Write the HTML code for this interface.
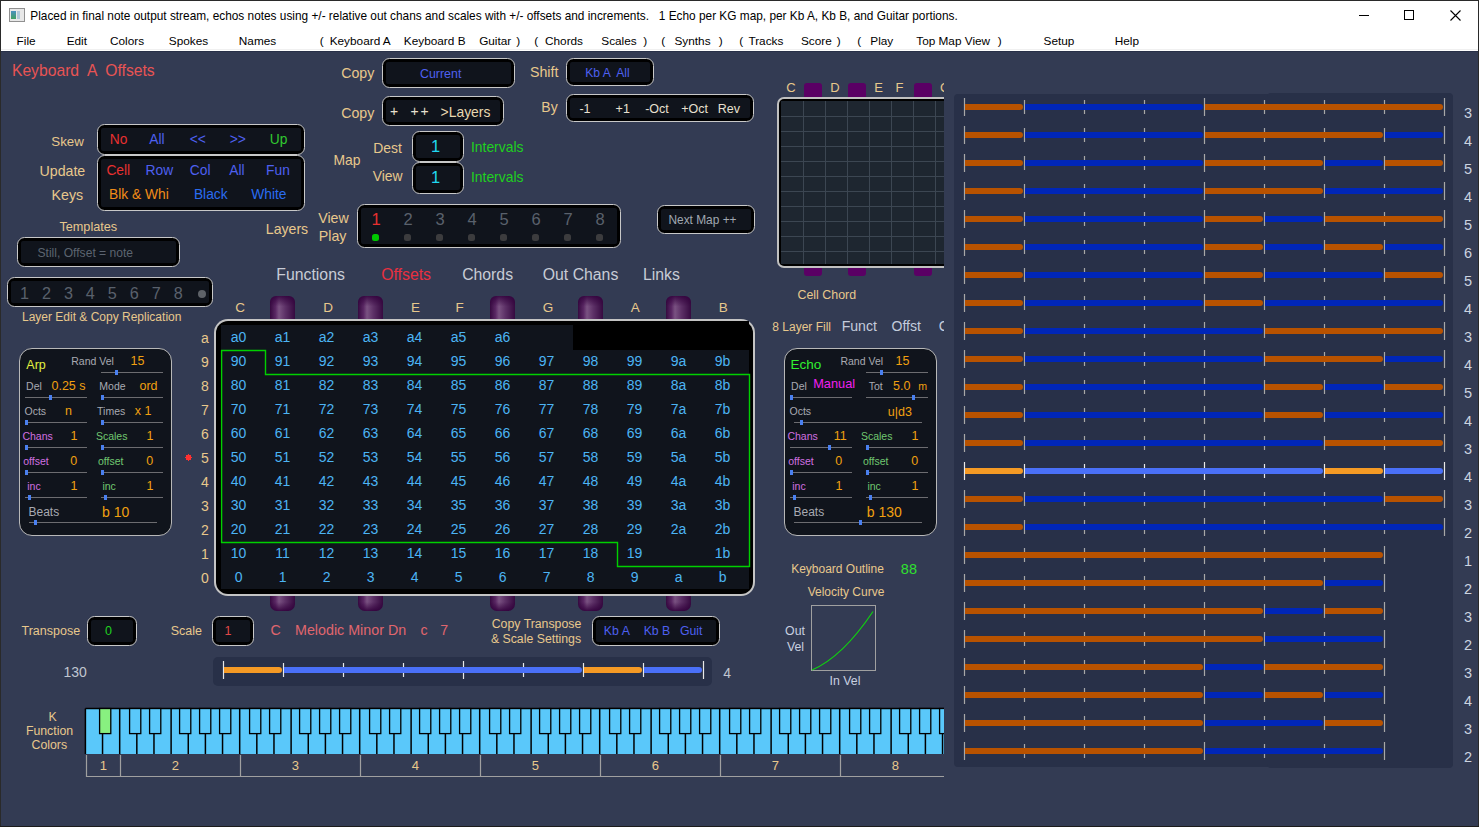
<!DOCTYPE html><html><head><meta charset="utf-8"><style>
html,body{margin:0;padding:0;width:1479px;height:827px;overflow:hidden;background:#333b53;}
body{position:relative;font-family:"Liberation Sans", sans-serif;}
.t{position:absolute;white-space:pre;line-height:1;}
.r{position:absolute;}
svg{position:absolute;left:0;top:0;}
</style></head><body>
<div class="r" style="left:0px;top:0px;width:1479px;height:51px;background:#ffffff;"></div>
<div class="r" style="left:0px;top:49px;width:1479px;height:1px;background:#f0f0f0;"></div>
<div class="r" style="left:0px;top:51px;width:1479px;height:1px;background:#283048;"></div>
<div class="r" style="left:0px;top:0px;width:1479px;height:1px;background:#2a2a2a;"></div>
<div class="r" style="left:0px;top:0px;width:1px;height:827px;background:#2a2a2a;"></div>
<div class="r" style="left:1478px;top:0px;width:1px;height:827px;background:#2a2a2a;"></div>
<div class="r" style="left:0px;top:826px;width:1479px;height:1px;background:#1c1c1c;"></div>
<div class="r" style="left:9px;top:8px;width:14px;height:12px;border:1px solid #909090;background:#e8e8e8"></div>
<div class="r" style="left:11px;top:11px;width:5px;height:8px;background:linear-gradient(#4a90c0,#40a060)"></div>
<div class="r" style="left:17px;top:11px;width:3px;height:8px;background:#b0c8d8"></div>
<div class="t" style="left:494.00px;top:10.97px;font-size:11.85px;color:#000;transform:translateX(-50%);">Placed in final note output stream, echos notes using +/- relative out chans and scales with +/- offsets and increments.   1 Echo per KG map, per Kb A, Kb B, and Guitar portions.</div>
<div class="r" style="left:1359px;top:15px;width:10px;height:1px;background:#000;"></div>
<div class="r" style="left:1404px;top:10px;width:8px;height:8px;border:1px solid #000"></div>
<svg width="1479" height="40" style="left:0;top:0"><path d="M1450.5 10.5 L1460.5 20.5 M1460.5 10.5 L1450.5 20.5" stroke="#000" stroke-width="1.1"/></svg>
<div class="t" style="left:26.10px;top:36.01px;font-size:11.8px;color:#000;transform:translateX(-50%);">File</div>
<div class="t" style="left:76.85px;top:36.01px;font-size:11.8px;color:#000;transform:translateX(-50%);">Edit</div>
<div class="t" style="left:127.00px;top:36.01px;font-size:11.8px;color:#000;transform:translateX(-50%);">Colors</div>
<div class="t" style="left:188.50px;top:36.01px;font-size:11.8px;color:#000;transform:translateX(-50%);">Spokes</div>
<div class="t" style="left:257.50px;top:36.01px;font-size:11.8px;color:#000;transform:translateX(-50%);">Names</div>
<div class="t" style="left:321.75px;top:36.01px;font-size:11.8px;color:#000;transform:translateX(-50%);">(</div>
<div class="t" style="left:360.20px;top:36.01px;font-size:11.8px;color:#000;transform:translateX(-50%);">Keyboard A</div>
<div class="t" style="left:434.70px;top:36.01px;font-size:11.8px;color:#000;transform:translateX(-50%);">Keyboard B</div>
<div class="t" style="left:495.20px;top:36.01px;font-size:11.8px;color:#000;transform:translateX(-50%);">Guitar</div>
<div class="t" style="left:518.25px;top:36.01px;font-size:11.8px;color:#000;transform:translateX(-50%);">)</div>
<div class="t" style="left:536.25px;top:36.01px;font-size:11.8px;color:#000;transform:translateX(-50%);">(</div>
<div class="t" style="left:564.00px;top:36.01px;font-size:11.8px;color:#000;transform:translateX(-50%);">Chords</div>
<div class="t" style="left:619.00px;top:36.01px;font-size:11.8px;color:#000;transform:translateX(-50%);">Scales</div>
<div class="t" style="left:645.25px;top:36.01px;font-size:11.8px;color:#000;transform:translateX(-50%);">)</div>
<div class="t" style="left:663.25px;top:36.01px;font-size:11.8px;color:#000;transform:translateX(-50%);">(</div>
<div class="t" style="left:692.50px;top:36.01px;font-size:11.8px;color:#000;transform:translateX(-50%);">Synths</div>
<div class="t" style="left:720.75px;top:36.01px;font-size:11.8px;color:#000;transform:translateX(-50%);">)</div>
<div class="t" style="left:741.25px;top:36.01px;font-size:11.8px;color:#000;transform:translateX(-50%);">(</div>
<div class="t" style="left:765.90px;top:36.01px;font-size:11.8px;color:#000;transform:translateX(-50%);">Tracks</div>
<div class="t" style="left:816.35px;top:36.01px;font-size:11.8px;color:#000;transform:translateX(-50%);">Score</div>
<div class="t" style="left:838.75px;top:36.01px;font-size:11.8px;color:#000;transform:translateX(-50%);">)</div>
<div class="t" style="left:859.25px;top:36.01px;font-size:11.8px;color:#000;transform:translateX(-50%);">(</div>
<div class="t" style="left:881.75px;top:36.01px;font-size:11.8px;color:#000;transform:translateX(-50%);">Play</div>
<div class="t" style="left:953.20px;top:36.01px;font-size:11.8px;color:#000;transform:translateX(-50%);">Top Map View</div>
<div class="t" style="left:999.75px;top:36.01px;font-size:11.8px;color:#000;transform:translateX(-50%);">)</div>
<div class="t" style="left:1059.00px;top:36.01px;font-size:11.8px;color:#000;transform:translateX(-50%);">Setup</div>
<div class="t" style="left:1126.90px;top:36.01px;font-size:11.8px;color:#000;transform:translateX(-50%);">Help</div>
<div class="t" style="left:83.30px;top:62.71px;font-size:15.7px;color:#e85454;transform:translateX(-50%);">Keyboard  A  Offsets</div>
<div class="t" style="left:357.80px;top:66.28px;font-size:14.2px;color:#e8c88c;transform:translateX(-50%);">Copy</div>
<div class="r" style="left:382px;top:58px;width:133px;height:30px;background:#000;border:1px solid #c8c8c8;border-radius:7.5px;box-sizing:border-box"></div>
<div class="r" style="left:386px;top:62px;width:125px;height:22px;background:#10141c;border-radius:2px"></div>
<div class="t" style="left:440.70px;top:68.00px;font-size:12.4px;color:#4e60f0;transform:translateX(-50%);">Current</div>
<div class="t" style="left:357.80px;top:106.28px;font-size:14.2px;color:#e8c88c;transform:translateX(-50%);">Copy</div>
<div class="r" style="left:382px;top:96px;width:122px;height:30px;background:#000;border:1px solid #c8c8c8;border-radius:7.5px;box-sizing:border-box"></div>
<div class="r" style="left:386px;top:100px;width:114px;height:22px;background:#10141c;border-radius:2px"></div>
<div class="t" style="left:394.00px;top:105.23px;font-size:13.9px;color:#e8e0d0;transform:translateX(-50%);">+</div>
<div class="t" style="left:419.60px;top:105.23px;font-size:13.9px;color:#e8e0d0;transform:translateX(-50%);letter-spacing:2px;margin-left:1px">++</div>
<div class="t" style="left:465.50px;top:106.23px;font-size:13.9px;color:#e8d8b0;transform:translateX(-50%);">>Layers</div>
<div class="t" style="left:544.20px;top:65.48px;font-size:14.2px;color:#e8c88c;transform:translateX(-50%);">Shift</div>
<div class="r" style="left:566px;top:58px;width:88px;height:28px;background:#000;border:1px solid #c8c8c8;border-radius:7.5px;box-sizing:border-box"></div>
<div class="r" style="left:570px;top:62px;width:80px;height:20px;background:#10141c;border-radius:2px"></div>
<div class="t" style="left:607.50px;top:66.76px;font-size:12.1px;color:#4e60f0;transform:translateX(-50%);">Kb A  All</div>
<div class="t" style="left:549.50px;top:100.35px;font-size:14px;color:#e8c88c;transform:translateX(-50%);">By</div>
<div class="r" style="left:566px;top:94px;width:188px;height:28px;background:#000;border:1px solid #c8c8c8;border-radius:7.5px;box-sizing:border-box"></div>
<div class="r" style="left:570px;top:98px;width:180px;height:20px;background:#10141c;border-radius:2px"></div>
<div class="t" style="left:585.00px;top:103.42px;font-size:12.5px;color:#e8e0d0;transform:translateX(-50%);">-1</div>
<div class="t" style="left:622.75px;top:103.42px;font-size:12.5px;color:#e8e0d0;transform:translateX(-50%);">+1</div>
<div class="t" style="left:657.00px;top:103.42px;font-size:12.5px;color:#e8e0d0;transform:translateX(-50%);">-Oct</div>
<div class="t" style="left:694.50px;top:103.42px;font-size:12.5px;color:#e8e0d0;transform:translateX(-50%);">+Oct</div>
<div class="t" style="left:728.80px;top:103.42px;font-size:12.5px;color:#e8e0d0;transform:translateX(-50%);">Rev</div>
<div class="t" style="left:67.60px;top:134.74px;font-size:13.3px;color:#e8c88c;transform:translateX(-50%);">Skew</div>
<div class="r" style="left:97px;top:124px;width:208px;height:31px;background:#000;border:1px solid #c8c8c8;border-radius:7.5px;box-sizing:border-box"></div>
<div class="r" style="left:101px;top:128px;width:200px;height:23px;background:#10141c;border-radius:2px"></div>
<div class="t" style="left:118.50px;top:133.32px;font-size:13.8px;color:#e83030;transform:translateX(-50%);">No</div>
<div class="t" style="left:157.00px;top:133.32px;font-size:13.8px;color:#4e60f0;transform:translateX(-50%);">All</div>
<div class="t" style="left:197.75px;top:133.32px;font-size:13.8px;color:#4e60f0;transform:translateX(-50%);"><<</div>
<div class="t" style="left:237.70px;top:133.32px;font-size:13.8px;color:#4e60f0;transform:translateX(-50%);">>></div>
<div class="t" style="left:278.55px;top:133.32px;font-size:13.8px;color:#30c830;transform:translateX(-50%);">Up</div>
<div class="t" style="left:62.40px;top:163.98px;font-size:14.2px;color:#e8c88c;transform:translateX(-50%);">Update</div>
<div class="t" style="left:67.30px;top:187.98px;font-size:14.2px;color:#e8c88c;transform:translateX(-50%);">Keys</div>
<div class="r" style="left:97px;top:155px;width:208px;height:56px;background:#000;border:1px solid #c8c8c8;border-radius:7.5px;box-sizing:border-box"></div>
<div class="r" style="left:101px;top:159px;width:200px;height:48px;background:#10141c;border-radius:2px"></div>
<div class="t" style="left:118.30px;top:164.32px;font-size:13.8px;color:#e83030;transform:translateX(-50%);">Cell</div>
<div class="t" style="left:159.30px;top:164.32px;font-size:13.8px;color:#4e60f0;transform:translateX(-50%);">Row</div>
<div class="t" style="left:200.15px;top:164.32px;font-size:13.8px;color:#4e60f0;transform:translateX(-50%);">Col</div>
<div class="t" style="left:236.90px;top:164.32px;font-size:13.8px;color:#4e60f0;transform:translateX(-50%);">All</div>
<div class="t" style="left:278.00px;top:164.32px;font-size:13.8px;color:#4e60f0;transform:translateX(-50%);">Fun</div>
<div class="t" style="left:138.90px;top:188.32px;font-size:13.8px;color:#f08c18;transform:translateX(-50%);">Blk & Whi</div>
<div class="t" style="left:210.80px;top:188.32px;font-size:13.8px;color:#2a6cf0;transform:translateX(-50%);">Black</div>
<div class="t" style="left:268.85px;top:188.32px;font-size:13.8px;color:#2a6cf0;transform:translateX(-50%);">White</div>
<div class="t" style="left:347.00px;top:154.23px;font-size:13.9px;color:#e8c88c;transform:translateX(-50%);">Map</div>
<div class="t" style="left:387.60px;top:142.23px;font-size:13.9px;color:#e8c88c;transform:translateX(-50%);">Dest</div>
<div class="t" style="left:387.60px;top:170.23px;font-size:13.9px;color:#e8c88c;transform:translateX(-50%);">View</div>
<div class="r" style="left:412px;top:131px;width:52px;height:31px;background:#000;border:1px solid #c8c8c8;border-radius:7.5px;box-sizing:border-box"></div>
<div class="r" style="left:416px;top:135px;width:44px;height:23px;background:#10141c;border-radius:2px"></div>
<div class="r" style="left:412px;top:162px;width:52px;height:32px;background:#000;border:1px solid #c8c8c8;border-radius:7.5px;box-sizing:border-box"></div>
<div class="r" style="left:416px;top:166px;width:44px;height:24px;background:#10141c;border-radius:2px"></div>
<div class="t" style="left:435.50px;top:137.53px;font-size:16.5px;color:#20d8f0;transform:translateX(-50%);">1</div>
<div class="t" style="left:435.50px;top:168.53px;font-size:16.5px;color:#20d8f0;transform:translateX(-50%);">1</div>
<div class="t" style="left:497.20px;top:140.73px;font-size:13.9px;color:#20d020;transform:translateX(-50%);">Intervals</div>
<div class="t" style="left:497.20px;top:171.23px;font-size:13.9px;color:#20d020;transform:translateX(-50%);">Intervals</div>
<div class="t" style="left:88.30px;top:221.25px;font-size:12.7px;color:#e8c88c;transform:translateX(-50%);">Templates</div>
<div class="r" style="left:17px;top:237px;width:163px;height:30px;background:#000;border:1px solid #c8c8c8;border-radius:7.5px;box-sizing:border-box"></div>
<div class="r" style="left:21px;top:241px;width:155px;height:22px;background:#10141c;border-radius:2px"></div>
<div class="t" style="left:85.30px;top:247.26px;font-size:12.1px;color:#5c6470;transform:translateX(-50%);">Still, Offset = note</div>
<div class="r" style="left:7px;top:277px;width:206px;height:30px;background:#000;border:1px solid #c8c8c8;border-radius:7.5px;box-sizing:border-box"></div>
<div class="r" style="left:11px;top:281px;width:198px;height:22px;background:#10141c;border-radius:2px"></div>
<div class="t" style="left:24.50px;top:285.29px;font-size:16.2px;color:#5a616c;transform:translateX(-50%);">1</div>
<div class="t" style="left:46.45px;top:285.29px;font-size:16.2px;color:#5a616c;transform:translateX(-50%);">2</div>
<div class="t" style="left:68.40px;top:285.29px;font-size:16.2px;color:#5a616c;transform:translateX(-50%);">3</div>
<div class="t" style="left:90.35px;top:285.29px;font-size:16.2px;color:#5a616c;transform:translateX(-50%);">4</div>
<div class="t" style="left:112.30px;top:285.29px;font-size:16.2px;color:#5a616c;transform:translateX(-50%);">5</div>
<div class="t" style="left:134.25px;top:285.29px;font-size:16.2px;color:#5a616c;transform:translateX(-50%);">6</div>
<div class="t" style="left:156.20px;top:285.29px;font-size:16.2px;color:#5a616c;transform:translateX(-50%);">7</div>
<div class="t" style="left:178.15px;top:285.29px;font-size:16.2px;color:#5a616c;transform:translateX(-50%);">8</div>
<div class="r" style="left:197.5px;top:289.5px;width:8px;height:8px;border-radius:4px;background:#5e6268"></div>
<div class="t" style="left:101.70px;top:310.84px;font-size:12px;color:#e8c88c;transform:translateX(-50%);">Layer Edit & Copy Replication</div>
<div class="t" style="left:287.00px;top:222.36px;font-size:14.1px;color:#e8c88c;transform:translateX(-50%);">Layers</div>
<div class="t" style="left:333.50px;top:210.98px;font-size:14.2px;color:#e8c88c;transform:translateX(-50%);">View</div>
<div class="t" style="left:332.60px;top:229.48px;font-size:14.2px;color:#e8c88c;transform:translateX(-50%);">Play</div>
<div class="r" style="left:357px;top:204px;width:264px;height:44px;background:#000;border:1px solid #c8c8c8;border-radius:7.5px;box-sizing:border-box"></div>
<div class="r" style="left:361px;top:208px;width:256px;height:36px;background:#10141c;border-radius:2px"></div>
<div class="t" style="left:376.00px;top:211.03px;font-size:16.5px;color:#e83030;transform:translateX(-50%);">1</div>
<div class="r" style="left:372px;top:234px;width:7px;height:7px;border-radius:2.5px;background:#00c800"></div>
<div class="t" style="left:408.00px;top:211.03px;font-size:16.5px;color:#5a616c;transform:translateX(-50%);">2</div>
<div class="r" style="left:404px;top:234px;width:7px;height:7px;border-radius:2.5px;background:#3c3c3e"></div>
<div class="t" style="left:440.00px;top:211.03px;font-size:16.5px;color:#5a616c;transform:translateX(-50%);">3</div>
<div class="r" style="left:436px;top:234px;width:7px;height:7px;border-radius:2.5px;background:#3c3c3e"></div>
<div class="t" style="left:472.00px;top:211.03px;font-size:16.5px;color:#5a616c;transform:translateX(-50%);">4</div>
<div class="r" style="left:468px;top:234px;width:7px;height:7px;border-radius:2.5px;background:#3c3c3e"></div>
<div class="t" style="left:504.00px;top:211.03px;font-size:16.5px;color:#5a616c;transform:translateX(-50%);">5</div>
<div class="r" style="left:500px;top:234px;width:7px;height:7px;border-radius:2.5px;background:#3c3c3e"></div>
<div class="t" style="left:536.00px;top:211.03px;font-size:16.5px;color:#5a616c;transform:translateX(-50%);">6</div>
<div class="r" style="left:532px;top:234px;width:7px;height:7px;border-radius:2.5px;background:#3c3c3e"></div>
<div class="t" style="left:568.00px;top:211.03px;font-size:16.5px;color:#5a616c;transform:translateX(-50%);">7</div>
<div class="r" style="left:564px;top:234px;width:7px;height:7px;border-radius:2.5px;background:#3c3c3e"></div>
<div class="t" style="left:600.00px;top:211.03px;font-size:16.5px;color:#5a616c;transform:translateX(-50%);">8</div>
<div class="r" style="left:596px;top:234px;width:7px;height:7px;border-radius:2.5px;background:#3c3c3e"></div>
<div class="r" style="left:657px;top:205px;width:98px;height:29px;background:#000;border:1px solid #c8c8c8;border-radius:7.5px;box-sizing:border-box"></div>
<div class="r" style="left:661px;top:209px;width:90px;height:21px;background:#10141c;border-radius:2px"></div>
<div class="t" style="left:702.50px;top:215.43px;font-size:11.9px;color:#a0a8b2;transform:translateX(-50%);">Next Map ++</div>
<div class="t" style="left:310.60px;top:267.13px;font-size:15.8px;color:#c8ccd6;transform:translateX(-50%);">Functions</div>
<div class="t" style="left:406.10px;top:267.13px;font-size:15.8px;color:#e83040;transform:translateX(-50%);">Offsets</div>
<div class="t" style="left:487.60px;top:267.13px;font-size:15.8px;color:#c8ccd6;transform:translateX(-50%);">Chords</div>
<div class="t" style="left:580.55px;top:267.13px;font-size:15.8px;color:#c8ccd6;transform:translateX(-50%);">Out Chans</div>
<div class="t" style="left:661.35px;top:267.13px;font-size:15.8px;color:#c8ccd6;transform:translateX(-50%);">Links</div>
<div class="r" style="left:214px;top:319px;width:541px;height:277px;background:#c4c4c4;border-radius:14px"></div>
<div class="r" style="left:216px;top:321px;width:537px;height:273px;background:#000;border-radius:12px"></div>
<div class="r" style="left:221px;top:325px;width:528px;height:264px;background:#10141c;"></div>
<div class="r" style="left:573px;top:321px;width:176px;height:28.5px;background:#000;"></div>
<div class="r" style="left:270.1px;top:296px;width:25px;height:23px;border-radius:6px 6px 0 0;background:linear-gradient(180deg,rgba(50,0,60,.85) 0%,rgba(50,0,60,0) 45%),linear-gradient(90deg,#360a40 0%,#5a2864 22%,#7a5282 36%,#5c3066 62%,#360a40 100%)"></div>
<div class="r" style="left:270.1px;top:596px;width:25px;height:15px;border-radius:0 0 7px 7px;background:linear-gradient(0deg,rgba(50,0,60,.9) 0%,rgba(50,0,60,0) 60%),linear-gradient(90deg,#360a40 0%,#5a2864 22%,#7a5282 36%,#5c3066 62%,#360a40 100%)"></div>
<div class="r" style="left:358.1px;top:296px;width:25px;height:23px;border-radius:6px 6px 0 0;background:linear-gradient(180deg,rgba(50,0,60,.85) 0%,rgba(50,0,60,0) 45%),linear-gradient(90deg,#360a40 0%,#5a2864 22%,#7a5282 36%,#5c3066 62%,#360a40 100%)"></div>
<div class="r" style="left:358.1px;top:596px;width:25px;height:15px;border-radius:0 0 7px 7px;background:linear-gradient(0deg,rgba(50,0,60,.9) 0%,rgba(50,0,60,0) 60%),linear-gradient(90deg,#360a40 0%,#5a2864 22%,#7a5282 36%,#5c3066 62%,#360a40 100%)"></div>
<div class="r" style="left:490.1px;top:296px;width:25px;height:23px;border-radius:6px 6px 0 0;background:linear-gradient(180deg,rgba(50,0,60,.85) 0%,rgba(50,0,60,0) 45%),linear-gradient(90deg,#360a40 0%,#5a2864 22%,#7a5282 36%,#5c3066 62%,#360a40 100%)"></div>
<div class="r" style="left:490.1px;top:596px;width:25px;height:15px;border-radius:0 0 7px 7px;background:linear-gradient(0deg,rgba(50,0,60,.9) 0%,rgba(50,0,60,0) 60%),linear-gradient(90deg,#360a40 0%,#5a2864 22%,#7a5282 36%,#5c3066 62%,#360a40 100%)"></div>
<div class="r" style="left:578.1px;top:296px;width:25px;height:23px;border-radius:6px 6px 0 0;background:linear-gradient(180deg,rgba(50,0,60,.85) 0%,rgba(50,0,60,0) 45%),linear-gradient(90deg,#360a40 0%,#5a2864 22%,#7a5282 36%,#5c3066 62%,#360a40 100%)"></div>
<div class="r" style="left:578.1px;top:596px;width:25px;height:15px;border-radius:0 0 7px 7px;background:linear-gradient(0deg,rgba(50,0,60,.9) 0%,rgba(50,0,60,0) 60%),linear-gradient(90deg,#360a40 0%,#5a2864 22%,#7a5282 36%,#5c3066 62%,#360a40 100%)"></div>
<div class="r" style="left:666.1px;top:296px;width:25px;height:23px;border-radius:6px 6px 0 0;background:linear-gradient(180deg,rgba(50,0,60,.85) 0%,rgba(50,0,60,0) 45%),linear-gradient(90deg,#360a40 0%,#5a2864 22%,#7a5282 36%,#5c3066 62%,#360a40 100%)"></div>
<div class="r" style="left:666.1px;top:596px;width:25px;height:15px;border-radius:0 0 7px 7px;background:linear-gradient(0deg,rgba(50,0,60,.9) 0%,rgba(50,0,60,0) 60%),linear-gradient(90deg,#360a40 0%,#5a2864 22%,#7a5282 36%,#5c3066 62%,#360a40 100%)"></div>
<div class="t" style="left:240.00px;top:300.57px;font-size:13.5px;color:#e8c88c;transform:translateX(-50%);">C</div>
<div class="t" style="left:328.00px;top:300.57px;font-size:13.5px;color:#e8c88c;transform:translateX(-50%);">D</div>
<div class="t" style="left:415.50px;top:300.57px;font-size:13.5px;color:#e8c88c;transform:translateX(-50%);">E</div>
<div class="t" style="left:459.60px;top:300.57px;font-size:13.5px;color:#e8c88c;transform:translateX(-50%);">F</div>
<div class="t" style="left:548.00px;top:300.57px;font-size:13.5px;color:#e8c88c;transform:translateX(-50%);">G</div>
<div class="t" style="left:635.30px;top:300.57px;font-size:13.5px;color:#e8c88c;transform:translateX(-50%);">A</div>
<div class="t" style="left:723.30px;top:300.57px;font-size:13.5px;color:#e8c88c;transform:translateX(-50%);">B</div>
<div class="t" style="left:205.00px;top:331.15px;font-size:14px;color:#e8c88c;transform:translateX(-50%);">a</div>
<div class="t" style="left:238.60px;top:330.15px;font-size:14px;color:#4cb4f4;transform:translateX(-50%);">a0</div>
<div class="t" style="left:282.60px;top:330.15px;font-size:14px;color:#4cb4f4;transform:translateX(-50%);">a1</div>
<div class="t" style="left:326.60px;top:330.15px;font-size:14px;color:#4cb4f4;transform:translateX(-50%);">a2</div>
<div class="t" style="left:370.60px;top:330.15px;font-size:14px;color:#4cb4f4;transform:translateX(-50%);">a3</div>
<div class="t" style="left:414.60px;top:330.15px;font-size:14px;color:#4cb4f4;transform:translateX(-50%);">a4</div>
<div class="t" style="left:458.60px;top:330.15px;font-size:14px;color:#4cb4f4;transform:translateX(-50%);">a5</div>
<div class="t" style="left:502.60px;top:330.15px;font-size:14px;color:#4cb4f4;transform:translateX(-50%);">a6</div>
<div class="t" style="left:205.00px;top:355.15px;font-size:14px;color:#e8c88c;transform:translateX(-50%);">9</div>
<div class="t" style="left:238.60px;top:354.15px;font-size:14px;color:#4cb4f4;transform:translateX(-50%);">90</div>
<div class="t" style="left:282.60px;top:354.15px;font-size:14px;color:#4cb4f4;transform:translateX(-50%);">91</div>
<div class="t" style="left:326.60px;top:354.15px;font-size:14px;color:#4cb4f4;transform:translateX(-50%);">92</div>
<div class="t" style="left:370.60px;top:354.15px;font-size:14px;color:#4cb4f4;transform:translateX(-50%);">93</div>
<div class="t" style="left:414.60px;top:354.15px;font-size:14px;color:#4cb4f4;transform:translateX(-50%);">94</div>
<div class="t" style="left:458.60px;top:354.15px;font-size:14px;color:#4cb4f4;transform:translateX(-50%);">95</div>
<div class="t" style="left:502.60px;top:354.15px;font-size:14px;color:#4cb4f4;transform:translateX(-50%);">96</div>
<div class="t" style="left:546.60px;top:354.15px;font-size:14px;color:#4cb4f4;transform:translateX(-50%);">97</div>
<div class="t" style="left:590.60px;top:354.15px;font-size:14px;color:#4cb4f4;transform:translateX(-50%);">98</div>
<div class="t" style="left:634.60px;top:354.15px;font-size:14px;color:#4cb4f4;transform:translateX(-50%);">99</div>
<div class="t" style="left:678.60px;top:354.15px;font-size:14px;color:#4cb4f4;transform:translateX(-50%);">9a</div>
<div class="t" style="left:722.60px;top:354.15px;font-size:14px;color:#4cb4f4;transform:translateX(-50%);">9b</div>
<div class="t" style="left:205.00px;top:379.15px;font-size:14px;color:#e8c88c;transform:translateX(-50%);">8</div>
<div class="t" style="left:238.60px;top:378.15px;font-size:14px;color:#4cb4f4;transform:translateX(-50%);">80</div>
<div class="t" style="left:282.60px;top:378.15px;font-size:14px;color:#4cb4f4;transform:translateX(-50%);">81</div>
<div class="t" style="left:326.60px;top:378.15px;font-size:14px;color:#4cb4f4;transform:translateX(-50%);">82</div>
<div class="t" style="left:370.60px;top:378.15px;font-size:14px;color:#4cb4f4;transform:translateX(-50%);">83</div>
<div class="t" style="left:414.60px;top:378.15px;font-size:14px;color:#4cb4f4;transform:translateX(-50%);">84</div>
<div class="t" style="left:458.60px;top:378.15px;font-size:14px;color:#4cb4f4;transform:translateX(-50%);">85</div>
<div class="t" style="left:502.60px;top:378.15px;font-size:14px;color:#4cb4f4;transform:translateX(-50%);">86</div>
<div class="t" style="left:546.60px;top:378.15px;font-size:14px;color:#4cb4f4;transform:translateX(-50%);">87</div>
<div class="t" style="left:590.60px;top:378.15px;font-size:14px;color:#4cb4f4;transform:translateX(-50%);">88</div>
<div class="t" style="left:634.60px;top:378.15px;font-size:14px;color:#4cb4f4;transform:translateX(-50%);">89</div>
<div class="t" style="left:678.60px;top:378.15px;font-size:14px;color:#4cb4f4;transform:translateX(-50%);">8a</div>
<div class="t" style="left:722.60px;top:378.15px;font-size:14px;color:#4cb4f4;transform:translateX(-50%);">8b</div>
<div class="t" style="left:205.00px;top:403.15px;font-size:14px;color:#e8c88c;transform:translateX(-50%);">7</div>
<div class="t" style="left:238.60px;top:402.15px;font-size:14px;color:#4cb4f4;transform:translateX(-50%);">70</div>
<div class="t" style="left:282.60px;top:402.15px;font-size:14px;color:#4cb4f4;transform:translateX(-50%);">71</div>
<div class="t" style="left:326.60px;top:402.15px;font-size:14px;color:#4cb4f4;transform:translateX(-50%);">72</div>
<div class="t" style="left:370.60px;top:402.15px;font-size:14px;color:#4cb4f4;transform:translateX(-50%);">73</div>
<div class="t" style="left:414.60px;top:402.15px;font-size:14px;color:#4cb4f4;transform:translateX(-50%);">74</div>
<div class="t" style="left:458.60px;top:402.15px;font-size:14px;color:#4cb4f4;transform:translateX(-50%);">75</div>
<div class="t" style="left:502.60px;top:402.15px;font-size:14px;color:#4cb4f4;transform:translateX(-50%);">76</div>
<div class="t" style="left:546.60px;top:402.15px;font-size:14px;color:#4cb4f4;transform:translateX(-50%);">77</div>
<div class="t" style="left:590.60px;top:402.15px;font-size:14px;color:#4cb4f4;transform:translateX(-50%);">78</div>
<div class="t" style="left:634.60px;top:402.15px;font-size:14px;color:#4cb4f4;transform:translateX(-50%);">79</div>
<div class="t" style="left:678.60px;top:402.15px;font-size:14px;color:#4cb4f4;transform:translateX(-50%);">7a</div>
<div class="t" style="left:722.60px;top:402.15px;font-size:14px;color:#4cb4f4;transform:translateX(-50%);">7b</div>
<div class="t" style="left:205.00px;top:427.15px;font-size:14px;color:#e8c88c;transform:translateX(-50%);">6</div>
<div class="t" style="left:238.60px;top:426.15px;font-size:14px;color:#4cb4f4;transform:translateX(-50%);">60</div>
<div class="t" style="left:282.60px;top:426.15px;font-size:14px;color:#4cb4f4;transform:translateX(-50%);">61</div>
<div class="t" style="left:326.60px;top:426.15px;font-size:14px;color:#4cb4f4;transform:translateX(-50%);">62</div>
<div class="t" style="left:370.60px;top:426.15px;font-size:14px;color:#4cb4f4;transform:translateX(-50%);">63</div>
<div class="t" style="left:414.60px;top:426.15px;font-size:14px;color:#4cb4f4;transform:translateX(-50%);">64</div>
<div class="t" style="left:458.60px;top:426.15px;font-size:14px;color:#4cb4f4;transform:translateX(-50%);">65</div>
<div class="t" style="left:502.60px;top:426.15px;font-size:14px;color:#4cb4f4;transform:translateX(-50%);">66</div>
<div class="t" style="left:546.60px;top:426.15px;font-size:14px;color:#4cb4f4;transform:translateX(-50%);">67</div>
<div class="t" style="left:590.60px;top:426.15px;font-size:14px;color:#4cb4f4;transform:translateX(-50%);">68</div>
<div class="t" style="left:634.60px;top:426.15px;font-size:14px;color:#4cb4f4;transform:translateX(-50%);">69</div>
<div class="t" style="left:678.60px;top:426.15px;font-size:14px;color:#4cb4f4;transform:translateX(-50%);">6a</div>
<div class="t" style="left:722.60px;top:426.15px;font-size:14px;color:#4cb4f4;transform:translateX(-50%);">6b</div>
<div class="t" style="left:205.00px;top:451.15px;font-size:14px;color:#e8c88c;transform:translateX(-50%);">5</div>
<div class="t" style="left:238.60px;top:450.15px;font-size:14px;color:#4cb4f4;transform:translateX(-50%);">50</div>
<div class="t" style="left:282.60px;top:450.15px;font-size:14px;color:#4cb4f4;transform:translateX(-50%);">51</div>
<div class="t" style="left:326.60px;top:450.15px;font-size:14px;color:#4cb4f4;transform:translateX(-50%);">52</div>
<div class="t" style="left:370.60px;top:450.15px;font-size:14px;color:#4cb4f4;transform:translateX(-50%);">53</div>
<div class="t" style="left:414.60px;top:450.15px;font-size:14px;color:#4cb4f4;transform:translateX(-50%);">54</div>
<div class="t" style="left:458.60px;top:450.15px;font-size:14px;color:#4cb4f4;transform:translateX(-50%);">55</div>
<div class="t" style="left:502.60px;top:450.15px;font-size:14px;color:#4cb4f4;transform:translateX(-50%);">56</div>
<div class="t" style="left:546.60px;top:450.15px;font-size:14px;color:#4cb4f4;transform:translateX(-50%);">57</div>
<div class="t" style="left:590.60px;top:450.15px;font-size:14px;color:#4cb4f4;transform:translateX(-50%);">58</div>
<div class="t" style="left:634.60px;top:450.15px;font-size:14px;color:#4cb4f4;transform:translateX(-50%);">59</div>
<div class="t" style="left:678.60px;top:450.15px;font-size:14px;color:#4cb4f4;transform:translateX(-50%);">5a</div>
<div class="t" style="left:722.60px;top:450.15px;font-size:14px;color:#4cb4f4;transform:translateX(-50%);">5b</div>
<div class="t" style="left:205.00px;top:475.15px;font-size:14px;color:#e8c88c;transform:translateX(-50%);">4</div>
<div class="t" style="left:238.60px;top:474.15px;font-size:14px;color:#4cb4f4;transform:translateX(-50%);">40</div>
<div class="t" style="left:282.60px;top:474.15px;font-size:14px;color:#4cb4f4;transform:translateX(-50%);">41</div>
<div class="t" style="left:326.60px;top:474.15px;font-size:14px;color:#4cb4f4;transform:translateX(-50%);">42</div>
<div class="t" style="left:370.60px;top:474.15px;font-size:14px;color:#4cb4f4;transform:translateX(-50%);">43</div>
<div class="t" style="left:414.60px;top:474.15px;font-size:14px;color:#4cb4f4;transform:translateX(-50%);">44</div>
<div class="t" style="left:458.60px;top:474.15px;font-size:14px;color:#4cb4f4;transform:translateX(-50%);">45</div>
<div class="t" style="left:502.60px;top:474.15px;font-size:14px;color:#4cb4f4;transform:translateX(-50%);">46</div>
<div class="t" style="left:546.60px;top:474.15px;font-size:14px;color:#4cb4f4;transform:translateX(-50%);">47</div>
<div class="t" style="left:590.60px;top:474.15px;font-size:14px;color:#4cb4f4;transform:translateX(-50%);">48</div>
<div class="t" style="left:634.60px;top:474.15px;font-size:14px;color:#4cb4f4;transform:translateX(-50%);">49</div>
<div class="t" style="left:678.60px;top:474.15px;font-size:14px;color:#4cb4f4;transform:translateX(-50%);">4a</div>
<div class="t" style="left:722.60px;top:474.15px;font-size:14px;color:#4cb4f4;transform:translateX(-50%);">4b</div>
<div class="t" style="left:205.00px;top:499.15px;font-size:14px;color:#e8c88c;transform:translateX(-50%);">3</div>
<div class="t" style="left:238.60px;top:498.15px;font-size:14px;color:#4cb4f4;transform:translateX(-50%);">30</div>
<div class="t" style="left:282.60px;top:498.15px;font-size:14px;color:#4cb4f4;transform:translateX(-50%);">31</div>
<div class="t" style="left:326.60px;top:498.15px;font-size:14px;color:#4cb4f4;transform:translateX(-50%);">32</div>
<div class="t" style="left:370.60px;top:498.15px;font-size:14px;color:#4cb4f4;transform:translateX(-50%);">33</div>
<div class="t" style="left:414.60px;top:498.15px;font-size:14px;color:#4cb4f4;transform:translateX(-50%);">34</div>
<div class="t" style="left:458.60px;top:498.15px;font-size:14px;color:#4cb4f4;transform:translateX(-50%);">35</div>
<div class="t" style="left:502.60px;top:498.15px;font-size:14px;color:#4cb4f4;transform:translateX(-50%);">36</div>
<div class="t" style="left:546.60px;top:498.15px;font-size:14px;color:#4cb4f4;transform:translateX(-50%);">37</div>
<div class="t" style="left:590.60px;top:498.15px;font-size:14px;color:#4cb4f4;transform:translateX(-50%);">38</div>
<div class="t" style="left:634.60px;top:498.15px;font-size:14px;color:#4cb4f4;transform:translateX(-50%);">39</div>
<div class="t" style="left:678.60px;top:498.15px;font-size:14px;color:#4cb4f4;transform:translateX(-50%);">3a</div>
<div class="t" style="left:722.60px;top:498.15px;font-size:14px;color:#4cb4f4;transform:translateX(-50%);">3b</div>
<div class="t" style="left:205.00px;top:523.15px;font-size:14px;color:#e8c88c;transform:translateX(-50%);">2</div>
<div class="t" style="left:238.60px;top:522.15px;font-size:14px;color:#4cb4f4;transform:translateX(-50%);">20</div>
<div class="t" style="left:282.60px;top:522.15px;font-size:14px;color:#4cb4f4;transform:translateX(-50%);">21</div>
<div class="t" style="left:326.60px;top:522.15px;font-size:14px;color:#4cb4f4;transform:translateX(-50%);">22</div>
<div class="t" style="left:370.60px;top:522.15px;font-size:14px;color:#4cb4f4;transform:translateX(-50%);">23</div>
<div class="t" style="left:414.60px;top:522.15px;font-size:14px;color:#4cb4f4;transform:translateX(-50%);">24</div>
<div class="t" style="left:458.60px;top:522.15px;font-size:14px;color:#4cb4f4;transform:translateX(-50%);">25</div>
<div class="t" style="left:502.60px;top:522.15px;font-size:14px;color:#4cb4f4;transform:translateX(-50%);">26</div>
<div class="t" style="left:546.60px;top:522.15px;font-size:14px;color:#4cb4f4;transform:translateX(-50%);">27</div>
<div class="t" style="left:590.60px;top:522.15px;font-size:14px;color:#4cb4f4;transform:translateX(-50%);">28</div>
<div class="t" style="left:634.60px;top:522.15px;font-size:14px;color:#4cb4f4;transform:translateX(-50%);">29</div>
<div class="t" style="left:678.60px;top:522.15px;font-size:14px;color:#4cb4f4;transform:translateX(-50%);">2a</div>
<div class="t" style="left:722.60px;top:522.15px;font-size:14px;color:#4cb4f4;transform:translateX(-50%);">2b</div>
<div class="t" style="left:205.00px;top:547.15px;font-size:14px;color:#e8c88c;transform:translateX(-50%);">1</div>
<div class="t" style="left:238.60px;top:546.15px;font-size:14px;color:#4cb4f4;transform:translateX(-50%);">10</div>
<div class="t" style="left:282.60px;top:546.15px;font-size:14px;color:#4cb4f4;transform:translateX(-50%);">11</div>
<div class="t" style="left:326.60px;top:546.15px;font-size:14px;color:#4cb4f4;transform:translateX(-50%);">12</div>
<div class="t" style="left:370.60px;top:546.15px;font-size:14px;color:#4cb4f4;transform:translateX(-50%);">13</div>
<div class="t" style="left:414.60px;top:546.15px;font-size:14px;color:#4cb4f4;transform:translateX(-50%);">14</div>
<div class="t" style="left:458.60px;top:546.15px;font-size:14px;color:#4cb4f4;transform:translateX(-50%);">15</div>
<div class="t" style="left:502.60px;top:546.15px;font-size:14px;color:#4cb4f4;transform:translateX(-50%);">16</div>
<div class="t" style="left:546.60px;top:546.15px;font-size:14px;color:#4cb4f4;transform:translateX(-50%);">17</div>
<div class="t" style="left:590.60px;top:546.15px;font-size:14px;color:#4cb4f4;transform:translateX(-50%);">18</div>
<div class="t" style="left:634.60px;top:546.15px;font-size:14px;color:#4cb4f4;transform:translateX(-50%);">19</div>
<div class="t" style="left:722.60px;top:546.15px;font-size:14px;color:#4cb4f4;transform:translateX(-50%);">1b</div>
<div class="t" style="left:205.00px;top:571.15px;font-size:14px;color:#e8c88c;transform:translateX(-50%);">0</div>
<div class="t" style="left:238.60px;top:570.15px;font-size:14px;color:#4cb4f4;transform:translateX(-50%);">0</div>
<div class="t" style="left:282.60px;top:570.15px;font-size:14px;color:#4cb4f4;transform:translateX(-50%);">1</div>
<div class="t" style="left:326.60px;top:570.15px;font-size:14px;color:#4cb4f4;transform:translateX(-50%);">2</div>
<div class="t" style="left:370.60px;top:570.15px;font-size:14px;color:#4cb4f4;transform:translateX(-50%);">3</div>
<div class="t" style="left:414.60px;top:570.15px;font-size:14px;color:#4cb4f4;transform:translateX(-50%);">4</div>
<div class="t" style="left:458.60px;top:570.15px;font-size:14px;color:#4cb4f4;transform:translateX(-50%);">5</div>
<div class="t" style="left:502.60px;top:570.15px;font-size:14px;color:#4cb4f4;transform:translateX(-50%);">6</div>
<div class="t" style="left:546.60px;top:570.15px;font-size:14px;color:#4cb4f4;transform:translateX(-50%);">7</div>
<div class="t" style="left:590.60px;top:570.15px;font-size:14px;color:#4cb4f4;transform:translateX(-50%);">8</div>
<div class="t" style="left:634.60px;top:570.15px;font-size:14px;color:#4cb4f4;transform:translateX(-50%);">9</div>
<div class="t" style="left:678.60px;top:570.15px;font-size:14px;color:#4cb4f4;transform:translateX(-50%);">a</div>
<div class="t" style="left:722.60px;top:570.15px;font-size:14px;color:#4cb4f4;transform:translateX(-50%);">b</div>
<svg width="1479" height="827"><path d="M186 455 H191 V460 H186 Z M185 457 H192 V458 H185 Z M188 454 H189 V461 H188 Z" fill="#ff3030" shape-rendering="crispEdges"/></svg>
<svg width="1479" height="827"><path d="M221.6 350.5 H265.5 V374.5 H749.5 V566.5 H617.5 V542.5 H221.6 Z" fill="none" stroke="#00d000" stroke-width="1.4"/></svg>
<div class="r" style="left:18.5px;top:348px;width:153px;height:188px;box-sizing:border-box;border:1px solid #b8b8b8;border-radius:13px;background:#10141c"></div>
<div class="t" style="left:36.05px;top:359.42px;font-size:12.5px;color:#e0f040;transform:translateX(-50%);">Arp</div>
<div class="t" style="left:92.55px;top:355.61px;font-size:10.5px;color:#a8aab2;transform:translateX(-50%);">Rand Vel</div>
<div class="t" style="left:137.40px;top:355.42px;font-size:12.5px;color:#f0a010;transform:translateX(-50%);">15</div>
<div class="r" style="left:101px;top:372px;width:62px;height:1px;background:#6c6c70;"></div>
<div class="r" style="left:115.0px;top:369.5px;width:3.0px;height:5.0px;background:#4a80f0;"></div>
<div class="t" style="left:34.00px;top:380.61px;font-size:10.5px;color:#a8aab2;transform:translateX(-50%);">Del</div>
<div class="t" style="left:68.50px;top:380.42px;font-size:12.5px;color:#f0a010;transform:translateX(-50%);">0.25 s</div>
<div class="t" style="left:112.45px;top:380.61px;font-size:10.5px;color:#a8aab2;transform:translateX(-50%);">Mode</div>
<div class="t" style="left:148.55px;top:380.42px;font-size:12.5px;color:#f0a010;transform:translateX(-50%);">ord</div>
<div class="r" style="left:25px;top:397px;width:62px;height:1px;background:#6c6c70;"></div>
<div class="r" style="left:49.0px;top:394.5px;width:3.0px;height:5.0px;background:#4a80f0;"></div>
<div class="r" style="left:101px;top:397px;width:62px;height:1px;background:#6c6c70;"></div>
<div class="r" style="left:101.0px;top:394.5px;width:3.0px;height:5.0px;background:#4a80f0;"></div>
<div class="t" style="left:35.30px;top:405.61px;font-size:10.5px;color:#a8aab2;transform:translateX(-50%);">Octs</div>
<div class="t" style="left:68.40px;top:405.42px;font-size:12.5px;color:#f0a010;transform:translateX(-50%);">n</div>
<div class="t" style="left:111.20px;top:405.61px;font-size:10.5px;color:#a8aab2;transform:translateX(-50%);">Times</div>
<div class="t" style="left:143.20px;top:405.42px;font-size:12.5px;color:#f0a010;transform:translateX(-50%);">x 1</div>
<div class="r" style="left:25px;top:422px;width:62px;height:1px;background:#6c6c70;"></div>
<div class="r" style="left:25.0px;top:419.5px;width:3.0px;height:5.0px;background:#4a80f0;"></div>
<div class="r" style="left:101px;top:422px;width:62px;height:1px;background:#6c6c70;"></div>
<div class="r" style="left:101.0px;top:419.5px;width:3.0px;height:5.0px;background:#4a80f0;"></div>
<div class="t" style="left:37.60px;top:430.61px;font-size:10.5px;color:#d070e0;transform:translateX(-50%);">Chans</div>
<div class="t" style="left:73.95px;top:430.42px;font-size:12.5px;color:#f0a010;transform:translateX(-50%);">1</div>
<div class="t" style="left:111.70px;top:430.61px;font-size:10.5px;color:#70c870;transform:translateX(-50%);">Scales</div>
<div class="t" style="left:150.00px;top:430.42px;font-size:12.5px;color:#f0a010;transform:translateX(-50%);">1</div>
<div class="r" style="left:25px;top:447px;width:62px;height:1px;background:#6c6c70;"></div>
<div class="r" style="left:25.0px;top:444.5px;width:3.0px;height:5.0px;background:#4a80f0;"></div>
<div class="r" style="left:101px;top:447px;width:62px;height:1px;background:#6c6c70;"></div>
<div class="r" style="left:101.0px;top:444.5px;width:3.0px;height:5.0px;background:#4a80f0;"></div>
<div class="t" style="left:36.00px;top:455.61px;font-size:10.5px;color:#d070e0;transform:translateX(-50%);">offset</div>
<div class="t" style="left:73.80px;top:455.42px;font-size:12.5px;color:#f0a010;transform:translateX(-50%);">0</div>
<div class="t" style="left:110.75px;top:455.61px;font-size:10.5px;color:#70c870;transform:translateX(-50%);">offset</div>
<div class="t" style="left:149.65px;top:455.42px;font-size:12.5px;color:#f0a010;transform:translateX(-50%);">0</div>
<div class="r" style="left:25px;top:472px;width:62px;height:1px;background:#6c6c70;"></div>
<div class="r" style="left:25.0px;top:469.5px;width:3.0px;height:5.0px;background:#4a80f0;"></div>
<div class="r" style="left:101px;top:472px;width:62px;height:1px;background:#6c6c70;"></div>
<div class="r" style="left:101.0px;top:469.5px;width:3.0px;height:5.0px;background:#4a80f0;"></div>
<div class="t" style="left:33.95px;top:480.61px;font-size:10.5px;color:#d070e0;transform:translateX(-50%);">inc</div>
<div class="t" style="left:73.95px;top:480.42px;font-size:12.5px;color:#f0a010;transform:translateX(-50%);">1</div>
<div class="t" style="left:109.15px;top:480.61px;font-size:10.5px;color:#70c870;transform:translateX(-50%);">inc</div>
<div class="t" style="left:150.00px;top:480.42px;font-size:12.5px;color:#f0a010;transform:translateX(-50%);">1</div>
<div class="r" style="left:25px;top:497px;width:62px;height:1px;background:#6c6c70;"></div>
<div class="r" style="left:28.0px;top:494.5px;width:3.0px;height:5.0px;background:#4a80f0;"></div>
<div class="r" style="left:101px;top:497px;width:62px;height:1px;background:#6c6c70;"></div>
<div class="r" style="left:104.0px;top:494.5px;width:3.0px;height:5.0px;background:#4a80f0;"></div>
<div class="t" style="left:43.85px;top:506.34px;font-size:12px;color:#a8aab2;transform:translateX(-50%);">Beats</div>
<div class="t" style="left:115.70px;top:505.15px;font-size:14px;color:#f0a010;transform:translateX(-50%);">b 10</div>
<div class="r" style="left:29px;top:522px;width:128px;height:1px;background:#6c6c70;"></div>
<div class="r" style="left:34.0px;top:519.5px;width:3.0px;height:5.0px;background:#4a80f0;"></div>
<div class="r" style="left:783.5px;top:348px;width:153px;height:188px;box-sizing:border-box;border:1px solid #b8b8b8;border-radius:13px;background:#10141c"></div>
<div class="t" style="left:805.90px;top:358.07px;font-size:13.5px;color:#30f030;transform:translateX(-50%);">Echo</div>
<div class="t" style="left:861.75px;top:355.61px;font-size:10.5px;color:#a8aab2;transform:translateX(-50%);">Rand Vel</div>
<div class="t" style="left:902.40px;top:355.42px;font-size:12.5px;color:#f0a010;transform:translateX(-50%);">15</div>
<div class="r" style="left:866px;top:372px;width:62px;height:1px;background:#6c6c70;"></div>
<div class="r" style="left:880.1px;top:369.5px;width:3.0px;height:5.0px;background:#4a80f0;"></div>
<div class="t" style="left:799.00px;top:380.61px;font-size:10.5px;color:#a8aab2;transform:translateX(-50%);">Del</div>
<div class="t" style="left:834.20px;top:378.16px;font-size:12.8px;color:#f020f0;transform:translateX(-50%);">Manual</div>
<div class="t" style="left:875.65px;top:380.61px;font-size:10.5px;color:#a8aab2;transform:translateX(-50%);">Tot</div>
<div class="t" style="left:901.75px;top:380.42px;font-size:12.5px;color:#f0a010;transform:translateX(-50%);">5.0</div>
<div class="t" style="left:922.70px;top:381.03px;font-size:10.6px;color:#f0a010;transform:translateX(-50%);">m</div>
<div class="r" style="left:790px;top:397px;width:62px;height:1px;background:#6c6c70;"></div>
<div class="r" style="left:789.9px;top:394.5px;width:3.0px;height:5.0px;background:#4a80f0;"></div>
<div class="r" style="left:866px;top:397px;width:62px;height:1px;background:#6c6c70;"></div>
<div class="r" style="left:911.8px;top:394.5px;width:3.0px;height:5.0px;background:#4a80f0;"></div>
<div class="t" style="left:800.30px;top:405.61px;font-size:10.5px;color:#a8aab2;transform:translateX(-50%);">Octs</div>
<div class="t" style="left:899.90px;top:405.92px;font-size:12.5px;color:#f0a010;transform:translateX(-50%);">u|d3</div>
<div class="r" style="left:794px;top:422px;width:128px;height:1px;background:#6c6c70;"></div>
<div class="r" style="left:799.5px;top:419.5px;width:3.0px;height:5.0px;background:#4a80f0;"></div>
<div class="t" style="left:802.60px;top:430.61px;font-size:10.5px;color:#d070e0;transform:translateX(-50%);">Chans</div>
<div class="t" style="left:840.30px;top:430.42px;font-size:12.5px;color:#f0a010;transform:translateX(-50%);">11</div>
<div class="t" style="left:876.70px;top:430.61px;font-size:10.5px;color:#70c870;transform:translateX(-50%);">Scales</div>
<div class="t" style="left:915.00px;top:430.42px;font-size:12.5px;color:#f0a010;transform:translateX(-50%);">1</div>
<div class="r" style="left:790px;top:447px;width:62px;height:1px;background:#6c6c70;"></div>
<div class="r" style="left:828.0px;top:444.5px;width:3.0px;height:5.0px;background:#4a80f0;"></div>
<div class="r" style="left:866px;top:447px;width:62px;height:1px;background:#6c6c70;"></div>
<div class="r" style="left:866.0px;top:444.5px;width:3.0px;height:5.0px;background:#4a80f0;"></div>
<div class="t" style="left:801.00px;top:455.61px;font-size:10.5px;color:#d070e0;transform:translateX(-50%);">offset</div>
<div class="t" style="left:838.80px;top:455.42px;font-size:12.5px;color:#f0a010;transform:translateX(-50%);">0</div>
<div class="t" style="left:875.75px;top:455.61px;font-size:10.5px;color:#70c870;transform:translateX(-50%);">offset</div>
<div class="t" style="left:914.65px;top:455.42px;font-size:12.5px;color:#f0a010;transform:translateX(-50%);">0</div>
<div class="r" style="left:790px;top:472px;width:62px;height:1px;background:#6c6c70;"></div>
<div class="r" style="left:790.0px;top:469.5px;width:3.0px;height:5.0px;background:#4a80f0;"></div>
<div class="r" style="left:866px;top:472px;width:62px;height:1px;background:#6c6c70;"></div>
<div class="r" style="left:866.0px;top:469.5px;width:3.0px;height:5.0px;background:#4a80f0;"></div>
<div class="t" style="left:798.95px;top:480.61px;font-size:10.5px;color:#d070e0;transform:translateX(-50%);">inc</div>
<div class="t" style="left:838.95px;top:480.42px;font-size:12.5px;color:#f0a010;transform:translateX(-50%);">1</div>
<div class="t" style="left:874.15px;top:480.61px;font-size:10.5px;color:#70c870;transform:translateX(-50%);">inc</div>
<div class="t" style="left:915.00px;top:480.42px;font-size:12.5px;color:#f0a010;transform:translateX(-50%);">1</div>
<div class="r" style="left:790px;top:497px;width:62px;height:1px;background:#6c6c70;"></div>
<div class="r" style="left:793.0px;top:494.5px;width:3.0px;height:5.0px;background:#4a80f0;"></div>
<div class="r" style="left:866px;top:497px;width:62px;height:1px;background:#6c6c70;"></div>
<div class="r" style="left:869.0px;top:494.5px;width:3.0px;height:5.0px;background:#4a80f0;"></div>
<div class="t" style="left:808.85px;top:506.34px;font-size:12px;color:#a8aab2;transform:translateX(-50%);">Beats</div>
<div class="t" style="left:884.30px;top:505.15px;font-size:14px;color:#f0a010;transform:translateX(-50%);">b 130</div>
<div class="r" style="left:794px;top:522px;width:128px;height:1px;background:#6c6c70;"></div>
<div class="r" style="left:859.0px;top:519.5px;width:3.0px;height:5.0px;background:#4a80f0;"></div>
<div class="r" style="left:0;top:0;width:944px;height:827px;overflow:hidden">
<div class="r" style="left:777px;top:97px;width:300px;height:171px;background:#c0c0c0;border-radius:7px"></div>
<div class="r" style="left:779px;top:99px;width:298px;height:167px;background:#000;border-radius:5px"></div>
<div class="r" style="left:781px;top:101px;width:219px;height:163px;background:#1e2630;"></div>
<svg width="1479" height="827"><g stroke="#3c4652" stroke-width="1"><path d="M803.5 101 V264" /><path d="M825.5 101 V264" /><path d="M847.5 101 V264" /><path d="M869.5 101 V264" /><path d="M891.5 101 V264" /><path d="M913.5 101 V264" /><path d="M935.5 101 V264" /><path d="M957.5 101 V264" /><path d="M781 116.5 H1000" /><path d="M781 131.5 H1000" /><path d="M781 146.5 H1000" /><path d="M781 161.5 H1000" /><path d="M781 176.5 H1000" /><path d="M781 191.5 H1000" /><path d="M781 206.5 H1000" /><path d="M781 221.5 H1000" /><path d="M781 236.5 H1000" /><path d="M781 251.5 H1000" /></g></svg>
<div class="r" style="left:804px;top:83px;width:18px;height:14px;background:#5a0064;border-radius:3px 3px 0 0"></div>
<div class="r" style="left:804px;top:268px;width:18px;height:8px;background:#5a0064;border-radius:0 0 3px 3px"></div>
<div class="r" style="left:848px;top:83px;width:18px;height:14px;background:#5a0064;border-radius:3px 3px 0 0"></div>
<div class="r" style="left:848px;top:268px;width:18px;height:8px;background:#5a0064;border-radius:0 0 3px 3px"></div>
<div class="r" style="left:914px;top:83px;width:18px;height:14px;background:#5a0064;border-radius:3px 3px 0 0"></div>
<div class="r" style="left:914px;top:268px;width:18px;height:8px;background:#5a0064;border-radius:0 0 3px 3px"></div>
<div class="t" style="left:791.00px;top:81.00px;font-size:13px;color:#e8c88c;transform:translateX(-50%);">C</div>
<div class="t" style="left:835.00px;top:81.00px;font-size:13px;color:#e8c88c;transform:translateX(-50%);">D</div>
<div class="t" style="left:878.50px;top:81.00px;font-size:13px;color:#e8c88c;transform:translateX(-50%);">E</div>
<div class="t" style="left:899.50px;top:81.00px;font-size:13px;color:#e8c88c;transform:translateX(-50%);">F</div>
<div class="t" style="left:945.00px;top:81.00px;font-size:13px;color:#e8c88c;transform:translateX(-50%);">G</div>
<div class="t" style="left:826.80px;top:288.50px;font-size:12.4px;color:#e8c88c;transform:translateX(-50%);">Cell Chord</div>
<div class="t" style="left:801.70px;top:321.34px;font-size:12px;color:#e8c88c;transform:translateX(-50%);">8 Layer Fill</div>
<div class="t" style="left:859.30px;top:318.56px;font-size:14.1px;color:#c4ccdc;transform:translateX(-50%);">Funct</div>
<div class="t" style="left:906.20px;top:318.56px;font-size:14.1px;color:#c4ccdc;transform:translateX(-50%);">Offst</div>
<div class="t" style="left:938.70px;top:318.56px;font-size:14.1px;color:#c4ccdc;">Chords</div>
<div class="r" style="left:85.4px;top:708.5px;width:891.4285714285714px;height:45.5px;background:#5ac8fa;"></div>
<svg width="1479" height="827"><g stroke="#000" stroke-width="1.5"><path d="M85.40 708.5 V754"/><path d="M102.54 708.5 V754"/><path d="M119.69 708.5 V754"/><path d="M136.83 708.5 V754"/><path d="M153.97 708.5 V754"/><path d="M171.11 708.5 V754"/><path d="M188.26 708.5 V754"/><path d="M205.40 708.5 V754"/><path d="M222.54 708.5 V754"/><path d="M239.69 708.5 V754"/><path d="M256.83 708.5 V754"/><path d="M273.97 708.5 V754"/><path d="M291.11 708.5 V754"/><path d="M308.26 708.5 V754"/><path d="M325.40 708.5 V754"/><path d="M342.54 708.5 V754"/><path d="M359.69 708.5 V754"/><path d="M376.83 708.5 V754"/><path d="M393.97 708.5 V754"/><path d="M411.11 708.5 V754"/><path d="M428.26 708.5 V754"/><path d="M445.40 708.5 V754"/><path d="M462.54 708.5 V754"/><path d="M479.69 708.5 V754"/><path d="M496.83 708.5 V754"/><path d="M513.97 708.5 V754"/><path d="M531.11 708.5 V754"/><path d="M548.26 708.5 V754"/><path d="M565.40 708.5 V754"/><path d="M582.54 708.5 V754"/><path d="M599.69 708.5 V754"/><path d="M616.83 708.5 V754"/><path d="M633.97 708.5 V754"/><path d="M651.11 708.5 V754"/><path d="M668.26 708.5 V754"/><path d="M685.40 708.5 V754"/><path d="M702.54 708.5 V754"/><path d="M719.69 708.5 V754"/><path d="M736.83 708.5 V754"/><path d="M753.97 708.5 V754"/><path d="M771.11 708.5 V754"/><path d="M788.26 708.5 V754"/><path d="M805.40 708.5 V754"/><path d="M822.54 708.5 V754"/><path d="M839.69 708.5 V754"/><path d="M856.83 708.5 V754"/><path d="M873.97 708.5 V754"/><path d="M891.11 708.5 V754"/><path d="M908.26 708.5 V754"/><path d="M925.40 708.5 V754"/><path d="M942.54 708.5 V754"/><path d="M959.69 708.5 V754"/><path d="M976.83 708.5 V754"/></g><path d="M85.4 708.5 H976.8285714285714" stroke="#000" stroke-width="1.5"/><rect x="99.59" y="708.5" width="11.2" height="25.100000000000023" fill="#88f080" stroke="#000" stroke-width="1.3"/><rect x="129.59" y="708.5" width="11.2" height="25.100000000000023" fill="#5ac8fa" stroke="#000" stroke-width="1.3"/><rect x="149.59" y="708.5" width="11.2" height="25.100000000000023" fill="#5ac8fa" stroke="#000" stroke-width="1.3"/><rect x="179.59" y="708.5" width="11.2" height="25.100000000000023" fill="#5ac8fa" stroke="#000" stroke-width="1.3"/><rect x="199.59" y="708.5" width="11.2" height="25.100000000000023" fill="#5ac8fa" stroke="#000" stroke-width="1.3"/><rect x="219.59" y="708.5" width="11.2" height="25.100000000000023" fill="#5ac8fa" stroke="#000" stroke-width="1.3"/><rect x="249.59" y="708.5" width="11.2" height="25.100000000000023" fill="#5ac8fa" stroke="#000" stroke-width="1.3"/><rect x="269.59" y="708.5" width="11.2" height="25.100000000000023" fill="#5ac8fa" stroke="#000" stroke-width="1.3"/><rect x="299.59" y="708.5" width="11.2" height="25.100000000000023" fill="#5ac8fa" stroke="#000" stroke-width="1.3"/><rect x="319.59" y="708.5" width="11.2" height="25.100000000000023" fill="#5ac8fa" stroke="#000" stroke-width="1.3"/><rect x="339.59" y="708.5" width="11.2" height="25.100000000000023" fill="#5ac8fa" stroke="#000" stroke-width="1.3"/><rect x="369.59" y="708.5" width="11.2" height="25.100000000000023" fill="#5ac8fa" stroke="#000" stroke-width="1.3"/><rect x="389.59" y="708.5" width="11.2" height="25.100000000000023" fill="#5ac8fa" stroke="#000" stroke-width="1.3"/><rect x="419.59" y="708.5" width="11.2" height="25.100000000000023" fill="#5ac8fa" stroke="#000" stroke-width="1.3"/><rect x="439.59" y="708.5" width="11.2" height="25.100000000000023" fill="#5ac8fa" stroke="#000" stroke-width="1.3"/><rect x="459.59" y="708.5" width="11.2" height="25.100000000000023" fill="#5ac8fa" stroke="#000" stroke-width="1.3"/><rect x="489.59" y="708.5" width="11.2" height="25.100000000000023" fill="#5ac8fa" stroke="#000" stroke-width="1.3"/><rect x="509.59" y="708.5" width="11.2" height="25.100000000000023" fill="#5ac8fa" stroke="#000" stroke-width="1.3"/><rect x="539.59" y="708.5" width="11.2" height="25.100000000000023" fill="#5ac8fa" stroke="#000" stroke-width="1.3"/><rect x="559.59" y="708.5" width="11.2" height="25.100000000000023" fill="#5ac8fa" stroke="#000" stroke-width="1.3"/><rect x="579.59" y="708.5" width="11.2" height="25.100000000000023" fill="#5ac8fa" stroke="#000" stroke-width="1.3"/><rect x="609.59" y="708.5" width="11.2" height="25.100000000000023" fill="#5ac8fa" stroke="#000" stroke-width="1.3"/><rect x="629.59" y="708.5" width="11.2" height="25.100000000000023" fill="#5ac8fa" stroke="#000" stroke-width="1.3"/><rect x="659.59" y="708.5" width="11.2" height="25.100000000000023" fill="#5ac8fa" stroke="#000" stroke-width="1.3"/><rect x="679.59" y="708.5" width="11.2" height="25.100000000000023" fill="#5ac8fa" stroke="#000" stroke-width="1.3"/><rect x="699.59" y="708.5" width="11.2" height="25.100000000000023" fill="#5ac8fa" stroke="#000" stroke-width="1.3"/><rect x="729.59" y="708.5" width="11.2" height="25.100000000000023" fill="#5ac8fa" stroke="#000" stroke-width="1.3"/><rect x="749.59" y="708.5" width="11.2" height="25.100000000000023" fill="#5ac8fa" stroke="#000" stroke-width="1.3"/><rect x="779.59" y="708.5" width="11.2" height="25.100000000000023" fill="#5ac8fa" stroke="#000" stroke-width="1.3"/><rect x="799.59" y="708.5" width="11.2" height="25.100000000000023" fill="#5ac8fa" stroke="#000" stroke-width="1.3"/><rect x="819.59" y="708.5" width="11.2" height="25.100000000000023" fill="#5ac8fa" stroke="#000" stroke-width="1.3"/><rect x="849.59" y="708.5" width="11.2" height="25.100000000000023" fill="#5ac8fa" stroke="#000" stroke-width="1.3"/><rect x="869.59" y="708.5" width="11.2" height="25.100000000000023" fill="#5ac8fa" stroke="#000" stroke-width="1.3"/><rect x="899.59" y="708.5" width="11.2" height="25.100000000000023" fill="#5ac8fa" stroke="#000" stroke-width="1.3"/><rect x="919.59" y="708.5" width="11.2" height="25.100000000000023" fill="#5ac8fa" stroke="#000" stroke-width="1.3"/><rect x="939.59" y="708.5" width="11.2" height="25.100000000000023" fill="#5ac8fa" stroke="#000" stroke-width="1.3"/></svg>
<svg width="1479" height="827"><g stroke="#a0a0a0" stroke-width="1.2" fill="none"><path d="M86.5 755 V776.5 H944"/><path d="M120.5 755 V776.5"/><path d="M240.5 755 V776.5"/><path d="M360.5 755 V776.5"/><path d="M480.5 755 V776.5"/><path d="M600.5 755 V776.5"/><path d="M720.5 755 V776.5"/><path d="M840.5 755 V776.5"/></g></svg>
<div class="t" style="left:103.30px;top:759.00px;font-size:13px;color:#e8c88c;transform:translateX(-50%);">1</div>
<div class="t" style="left:175.30px;top:759.00px;font-size:13px;color:#e8c88c;transform:translateX(-50%);">2</div>
<div class="t" style="left:295.30px;top:759.00px;font-size:13px;color:#e8c88c;transform:translateX(-50%);">3</div>
<div class="t" style="left:415.30px;top:759.00px;font-size:13px;color:#e8c88c;transform:translateX(-50%);">4</div>
<div class="t" style="left:535.30px;top:759.00px;font-size:13px;color:#e8c88c;transform:translateX(-50%);">5</div>
<div class="t" style="left:655.30px;top:759.00px;font-size:13px;color:#e8c88c;transform:translateX(-50%);">6</div>
<div class="t" style="left:775.30px;top:759.00px;font-size:13px;color:#e8c88c;transform:translateX(-50%);">7</div>
<div class="t" style="left:895.30px;top:759.00px;font-size:13px;color:#e8c88c;transform:translateX(-50%);">8</div>
</div>
<div class="t" style="left:52.50px;top:710.59px;font-size:12.3px;color:#e8c88c;transform:translateX(-50%);">K</div>
<div class="t" style="left:49.50px;top:724.59px;font-size:12.3px;color:#e8c88c;transform:translateX(-50%);">Function</div>
<div class="t" style="left:49.30px;top:738.59px;font-size:12.3px;color:#e8c88c;transform:translateX(-50%);">Colors</div>
<div class="r" style="left:954px;top:94px;width:499px;height:673px;background:#283048;border-radius:4px"></div>
<div class="r" style="left:1267px;top:92.7px;width:186px;height:675.3px;background:#283048;border-radius:4px"></div>
<div class="t" style="left:1468.00px;top:106.23px;font-size:14.5px;color:#ccd4e0;transform:translateX(-50%);">3</div>
<div class="t" style="left:1468.00px;top:134.23px;font-size:14.5px;color:#ccd4e0;transform:translateX(-50%);">4</div>
<div class="t" style="left:1468.00px;top:162.23px;font-size:14.5px;color:#ccd4e0;transform:translateX(-50%);">5</div>
<div class="t" style="left:1468.00px;top:190.23px;font-size:14.5px;color:#ccd4e0;transform:translateX(-50%);">4</div>
<div class="t" style="left:1468.00px;top:218.23px;font-size:14.5px;color:#ccd4e0;transform:translateX(-50%);">5</div>
<div class="t" style="left:1468.00px;top:246.23px;font-size:14.5px;color:#ccd4e0;transform:translateX(-50%);">6</div>
<div class="t" style="left:1468.00px;top:274.23px;font-size:14.5px;color:#ccd4e0;transform:translateX(-50%);">5</div>
<div class="t" style="left:1468.00px;top:302.23px;font-size:14.5px;color:#ccd4e0;transform:translateX(-50%);">4</div>
<div class="t" style="left:1468.00px;top:330.23px;font-size:14.5px;color:#ccd4e0;transform:translateX(-50%);">3</div>
<div class="t" style="left:1468.00px;top:358.23px;font-size:14.5px;color:#ccd4e0;transform:translateX(-50%);">4</div>
<div class="t" style="left:1468.00px;top:386.23px;font-size:14.5px;color:#ccd4e0;transform:translateX(-50%);">5</div>
<div class="t" style="left:1468.00px;top:414.23px;font-size:14.5px;color:#ccd4e0;transform:translateX(-50%);">4</div>
<div class="t" style="left:1468.00px;top:442.23px;font-size:14.5px;color:#ccd4e0;transform:translateX(-50%);">3</div>
<div class="t" style="left:1468.00px;top:470.23px;font-size:14.5px;color:#ccd4e0;transform:translateX(-50%);">4</div>
<div class="t" style="left:1468.00px;top:498.23px;font-size:14.5px;color:#ccd4e0;transform:translateX(-50%);">3</div>
<div class="t" style="left:1468.00px;top:526.23px;font-size:14.5px;color:#ccd4e0;transform:translateX(-50%);">2</div>
<div class="t" style="left:1468.00px;top:554.23px;font-size:14.5px;color:#ccd4e0;transform:translateX(-50%);">1</div>
<div class="t" style="left:1468.00px;top:582.23px;font-size:14.5px;color:#ccd4e0;transform:translateX(-50%);">2</div>
<div class="t" style="left:1468.00px;top:610.23px;font-size:14.5px;color:#ccd4e0;transform:translateX(-50%);">3</div>
<div class="t" style="left:1468.00px;top:638.23px;font-size:14.5px;color:#ccd4e0;transform:translateX(-50%);">2</div>
<div class="t" style="left:1468.00px;top:666.23px;font-size:14.5px;color:#ccd4e0;transform:translateX(-50%);">3</div>
<div class="t" style="left:1468.00px;top:694.23px;font-size:14.5px;color:#ccd4e0;transform:translateX(-50%);">4</div>
<div class="t" style="left:1468.00px;top:722.23px;font-size:14.5px;color:#ccd4e0;transform:translateX(-50%);">3</div>
<div class="t" style="left:1468.00px;top:750.23px;font-size:14.5px;color:#ccd4e0;transform:translateX(-50%);">2</div>
<svg width="1479" height="827"><path d="M964.5 98 V116" stroke="#a8a8a8" stroke-width="1.2"/><path d="M1024.5 100 V114" stroke="#a8a8a8" stroke-width="1.2"/><path d="M1084.5 100 V114" stroke="#a8a8a8" stroke-width="1.2"/><path d="M1144.5 100 V114" stroke="#a8a8a8" stroke-width="1.2"/><path d="M1204.5 98 V116" stroke="#a8a8a8" stroke-width="1.2"/><path d="M1264.5 100 V114" stroke="#a8a8a8" stroke-width="1.2"/><path d="M1324.5 100 V114" stroke="#a8a8a8" stroke-width="1.2"/><path d="M1384.5 100 V114" stroke="#a8a8a8" stroke-width="1.2"/><path d="M1444.5 98 V116" stroke="#a8a8a8" stroke-width="1.2"/><path d="M965 104 H1020 A3 3 0 0 1 1020 110 H965 Z" fill="#b85200"/><path d="M1025 104 H1200 A3 3 0 0 1 1200 110 H1025 Z" fill="#0026b8"/><path d="M1205 104 H1440 A3 3 0 0 1 1440 110 H1205 Z" fill="#b85200"/><path d="M964.5 126 V144" stroke="#a8a8a8" stroke-width="1.2"/><path d="M1024.5 128 V142" stroke="#a8a8a8" stroke-width="1.2"/><path d="M1084.5 128 V142" stroke="#a8a8a8" stroke-width="1.2"/><path d="M1144.5 128 V142" stroke="#a8a8a8" stroke-width="1.2"/><path d="M1204.5 126 V144" stroke="#a8a8a8" stroke-width="1.2"/><path d="M1264.5 128 V142" stroke="#a8a8a8" stroke-width="1.2"/><path d="M1324.5 128 V142" stroke="#a8a8a8" stroke-width="1.2"/><path d="M1384.5 128 V142" stroke="#a8a8a8" stroke-width="1.2"/><path d="M1444.5 126 V144" stroke="#a8a8a8" stroke-width="1.2"/><path d="M965 132 H1020 A3 3 0 0 1 1020 138 H965 Z" fill="#b85200"/><path d="M1025 132 H1200 A3 3 0 0 1 1200 138 H1025 Z" fill="#0026b8"/><path d="M1205 132 H1380 A3 3 0 0 1 1380 138 H1205 Z" fill="#b85200"/><path d="M1385 132 H1440 A3 3 0 0 1 1440 138 H1385 Z" fill="#0026b8"/><path d="M964.5 154 V172" stroke="#a8a8a8" stroke-width="1.2"/><path d="M1024.5 156 V170" stroke="#a8a8a8" stroke-width="1.2"/><path d="M1084.5 156 V170" stroke="#a8a8a8" stroke-width="1.2"/><path d="M1144.5 156 V170" stroke="#a8a8a8" stroke-width="1.2"/><path d="M1204.5 154 V172" stroke="#a8a8a8" stroke-width="1.2"/><path d="M1264.5 156 V170" stroke="#a8a8a8" stroke-width="1.2"/><path d="M1324.5 156 V170" stroke="#a8a8a8" stroke-width="1.2"/><path d="M1384.5 156 V170" stroke="#a8a8a8" stroke-width="1.2"/><path d="M1444.5 154 V172" stroke="#a8a8a8" stroke-width="1.2"/><path d="M965 160 H1020 A3 3 0 0 1 1020 166 H965 Z" fill="#b85200"/><path d="M1025 160 H1200 A3 3 0 0 1 1200 166 H1025 Z" fill="#0026b8"/><path d="M1205 160 H1320 A3 3 0 0 1 1320 166 H1205 Z" fill="#b85200"/><path d="M1325 160 H1380 A3 3 0 0 1 1380 166 H1325 Z" fill="#0026b8"/><path d="M1385 160 H1440 A3 3 0 0 1 1440 166 H1385 Z" fill="#b85200"/><path d="M964.5 182 V200" stroke="#a8a8a8" stroke-width="1.2"/><path d="M1024.5 184 V198" stroke="#a8a8a8" stroke-width="1.2"/><path d="M1084.5 184 V198" stroke="#a8a8a8" stroke-width="1.2"/><path d="M1144.5 184 V198" stroke="#a8a8a8" stroke-width="1.2"/><path d="M1204.5 182 V200" stroke="#a8a8a8" stroke-width="1.2"/><path d="M1264.5 184 V198" stroke="#a8a8a8" stroke-width="1.2"/><path d="M1324.5 184 V198" stroke="#a8a8a8" stroke-width="1.2"/><path d="M1384.5 184 V198" stroke="#a8a8a8" stroke-width="1.2"/><path d="M1444.5 182 V200" stroke="#a8a8a8" stroke-width="1.2"/><path d="M965 188 H1020 A3 3 0 0 1 1020 194 H965 Z" fill="#b85200"/><path d="M1025 188 H1200 A3 3 0 0 1 1200 194 H1025 Z" fill="#0026b8"/><path d="M1205 188 H1320 A3 3 0 0 1 1320 194 H1205 Z" fill="#b85200"/><path d="M1325 188 H1440 A3 3 0 0 1 1440 194 H1325 Z" fill="#0026b8"/><path d="M964.5 210 V228" stroke="#a8a8a8" stroke-width="1.2"/><path d="M1024.5 212 V226" stroke="#a8a8a8" stroke-width="1.2"/><path d="M1084.5 212 V226" stroke="#a8a8a8" stroke-width="1.2"/><path d="M1144.5 212 V226" stroke="#a8a8a8" stroke-width="1.2"/><path d="M1204.5 210 V228" stroke="#a8a8a8" stroke-width="1.2"/><path d="M1264.5 212 V226" stroke="#a8a8a8" stroke-width="1.2"/><path d="M1324.5 212 V226" stroke="#a8a8a8" stroke-width="1.2"/><path d="M1384.5 212 V226" stroke="#a8a8a8" stroke-width="1.2"/><path d="M1444.5 210 V228" stroke="#a8a8a8" stroke-width="1.2"/><path d="M965 216 H1020 A3 3 0 0 1 1020 222 H965 Z" fill="#b85200"/><path d="M1025 216 H1200 A3 3 0 0 1 1200 222 H1025 Z" fill="#0026b8"/><path d="M1205 216 H1260 A3 3 0 0 1 1260 222 H1205 Z" fill="#b85200"/><path d="M1265 216 H1320 A3 3 0 0 1 1320 222 H1265 Z" fill="#0026b8"/><path d="M1325 216 H1440 A3 3 0 0 1 1440 222 H1325 Z" fill="#b85200"/><path d="M964.5 238 V256" stroke="#a8a8a8" stroke-width="1.2"/><path d="M1024.5 240 V254" stroke="#a8a8a8" stroke-width="1.2"/><path d="M1084.5 240 V254" stroke="#a8a8a8" stroke-width="1.2"/><path d="M1144.5 240 V254" stroke="#a8a8a8" stroke-width="1.2"/><path d="M1204.5 238 V256" stroke="#a8a8a8" stroke-width="1.2"/><path d="M1264.5 240 V254" stroke="#a8a8a8" stroke-width="1.2"/><path d="M1324.5 240 V254" stroke="#a8a8a8" stroke-width="1.2"/><path d="M1384.5 240 V254" stroke="#a8a8a8" stroke-width="1.2"/><path d="M1444.5 238 V256" stroke="#a8a8a8" stroke-width="1.2"/><path d="M965 244 H1020 A3 3 0 0 1 1020 250 H965 Z" fill="#b85200"/><path d="M1025 244 H1200 A3 3 0 0 1 1200 250 H1025 Z" fill="#0026b8"/><path d="M1205 244 H1260 A3 3 0 0 1 1260 250 H1205 Z" fill="#b85200"/><path d="M1265 244 H1320 A3 3 0 0 1 1320 250 H1265 Z" fill="#0026b8"/><path d="M1325 244 H1380 A3 3 0 0 1 1380 250 H1325 Z" fill="#b85200"/><path d="M1385 244 H1440 A3 3 0 0 1 1440 250 H1385 Z" fill="#0026b8"/><path d="M964.5 266 V284" stroke="#a8a8a8" stroke-width="1.2"/><path d="M1024.5 268 V282" stroke="#a8a8a8" stroke-width="1.2"/><path d="M1084.5 268 V282" stroke="#a8a8a8" stroke-width="1.2"/><path d="M1144.5 268 V282" stroke="#a8a8a8" stroke-width="1.2"/><path d="M1204.5 266 V284" stroke="#a8a8a8" stroke-width="1.2"/><path d="M1264.5 268 V282" stroke="#a8a8a8" stroke-width="1.2"/><path d="M1324.5 268 V282" stroke="#a8a8a8" stroke-width="1.2"/><path d="M1384.5 268 V282" stroke="#a8a8a8" stroke-width="1.2"/><path d="M1444.5 266 V284" stroke="#a8a8a8" stroke-width="1.2"/><path d="M965 272 H1020 A3 3 0 0 1 1020 278 H965 Z" fill="#b85200"/><path d="M1025 272 H1200 A3 3 0 0 1 1200 278 H1025 Z" fill="#0026b8"/><path d="M1205 272 H1260 A3 3 0 0 1 1260 278 H1205 Z" fill="#b85200"/><path d="M1265 272 H1380 A3 3 0 0 1 1380 278 H1265 Z" fill="#0026b8"/><path d="M1385 272 H1440 A3 3 0 0 1 1440 278 H1385 Z" fill="#b85200"/><path d="M964.5 294 V312" stroke="#a8a8a8" stroke-width="1.2"/><path d="M1024.5 296 V310" stroke="#a8a8a8" stroke-width="1.2"/><path d="M1084.5 296 V310" stroke="#a8a8a8" stroke-width="1.2"/><path d="M1144.5 296 V310" stroke="#a8a8a8" stroke-width="1.2"/><path d="M1204.5 294 V312" stroke="#a8a8a8" stroke-width="1.2"/><path d="M1264.5 296 V310" stroke="#a8a8a8" stroke-width="1.2"/><path d="M1324.5 296 V310" stroke="#a8a8a8" stroke-width="1.2"/><path d="M1384.5 296 V310" stroke="#a8a8a8" stroke-width="1.2"/><path d="M1444.5 294 V312" stroke="#a8a8a8" stroke-width="1.2"/><path d="M965 300 H1020 A3 3 0 0 1 1020 306 H965 Z" fill="#b85200"/><path d="M1025 300 H1200 A3 3 0 0 1 1200 306 H1025 Z" fill="#0026b8"/><path d="M1205 300 H1260 A3 3 0 0 1 1260 306 H1205 Z" fill="#b85200"/><path d="M1265 300 H1440 A3 3 0 0 1 1440 306 H1265 Z" fill="#0026b8"/><path d="M964.5 322 V340" stroke="#a8a8a8" stroke-width="1.2"/><path d="M1024.5 324 V338" stroke="#a8a8a8" stroke-width="1.2"/><path d="M1084.5 324 V338" stroke="#a8a8a8" stroke-width="1.2"/><path d="M1144.5 324 V338" stroke="#a8a8a8" stroke-width="1.2"/><path d="M1204.5 322 V340" stroke="#a8a8a8" stroke-width="1.2"/><path d="M1264.5 324 V338" stroke="#a8a8a8" stroke-width="1.2"/><path d="M1324.5 324 V338" stroke="#a8a8a8" stroke-width="1.2"/><path d="M1384.5 324 V338" stroke="#a8a8a8" stroke-width="1.2"/><path d="M1444.5 322 V340" stroke="#a8a8a8" stroke-width="1.2"/><path d="M965 328 H1020 A3 3 0 0 1 1020 334 H965 Z" fill="#b85200"/><path d="M1025 328 H1260 A3 3 0 0 1 1260 334 H1025 Z" fill="#0026b8"/><path d="M1265 328 H1440 A3 3 0 0 1 1440 334 H1265 Z" fill="#b85200"/><path d="M964.5 350 V368" stroke="#a8a8a8" stroke-width="1.2"/><path d="M1024.5 352 V366" stroke="#a8a8a8" stroke-width="1.2"/><path d="M1084.5 352 V366" stroke="#a8a8a8" stroke-width="1.2"/><path d="M1144.5 352 V366" stroke="#a8a8a8" stroke-width="1.2"/><path d="M1204.5 350 V368" stroke="#a8a8a8" stroke-width="1.2"/><path d="M1264.5 352 V366" stroke="#a8a8a8" stroke-width="1.2"/><path d="M1324.5 352 V366" stroke="#a8a8a8" stroke-width="1.2"/><path d="M1384.5 352 V366" stroke="#a8a8a8" stroke-width="1.2"/><path d="M1444.5 350 V368" stroke="#a8a8a8" stroke-width="1.2"/><path d="M965 356 H1020 A3 3 0 0 1 1020 362 H965 Z" fill="#b85200"/><path d="M1025 356 H1260 A3 3 0 0 1 1260 362 H1025 Z" fill="#0026b8"/><path d="M1265 356 H1380 A3 3 0 0 1 1380 362 H1265 Z" fill="#b85200"/><path d="M1385 356 H1440 A3 3 0 0 1 1440 362 H1385 Z" fill="#0026b8"/><path d="M964.5 378 V396" stroke="#a8a8a8" stroke-width="1.2"/><path d="M1024.5 380 V394" stroke="#a8a8a8" stroke-width="1.2"/><path d="M1084.5 380 V394" stroke="#a8a8a8" stroke-width="1.2"/><path d="M1144.5 380 V394" stroke="#a8a8a8" stroke-width="1.2"/><path d="M1204.5 378 V396" stroke="#a8a8a8" stroke-width="1.2"/><path d="M1264.5 380 V394" stroke="#a8a8a8" stroke-width="1.2"/><path d="M1324.5 380 V394" stroke="#a8a8a8" stroke-width="1.2"/><path d="M1384.5 380 V394" stroke="#a8a8a8" stroke-width="1.2"/><path d="M1444.5 378 V396" stroke="#a8a8a8" stroke-width="1.2"/><path d="M965 384 H1020 A3 3 0 0 1 1020 390 H965 Z" fill="#b85200"/><path d="M1025 384 H1260 A3 3 0 0 1 1260 390 H1025 Z" fill="#0026b8"/><path d="M1265 384 H1320 A3 3 0 0 1 1320 390 H1265 Z" fill="#b85200"/><path d="M1325 384 H1380 A3 3 0 0 1 1380 390 H1325 Z" fill="#0026b8"/><path d="M1385 384 H1440 A3 3 0 0 1 1440 390 H1385 Z" fill="#b85200"/><path d="M964.5 406 V424" stroke="#a8a8a8" stroke-width="1.2"/><path d="M1024.5 408 V422" stroke="#a8a8a8" stroke-width="1.2"/><path d="M1084.5 408 V422" stroke="#a8a8a8" stroke-width="1.2"/><path d="M1144.5 408 V422" stroke="#a8a8a8" stroke-width="1.2"/><path d="M1204.5 406 V424" stroke="#a8a8a8" stroke-width="1.2"/><path d="M1264.5 408 V422" stroke="#a8a8a8" stroke-width="1.2"/><path d="M1324.5 408 V422" stroke="#a8a8a8" stroke-width="1.2"/><path d="M1384.5 408 V422" stroke="#a8a8a8" stroke-width="1.2"/><path d="M1444.5 406 V424" stroke="#a8a8a8" stroke-width="1.2"/><path d="M965 412 H1020 A3 3 0 0 1 1020 418 H965 Z" fill="#b85200"/><path d="M1025 412 H1260 A3 3 0 0 1 1260 418 H1025 Z" fill="#0026b8"/><path d="M1265 412 H1320 A3 3 0 0 1 1320 418 H1265 Z" fill="#b85200"/><path d="M1325 412 H1440 A3 3 0 0 1 1440 418 H1325 Z" fill="#0026b8"/><path d="M964.5 434 V452" stroke="#a8a8a8" stroke-width="1.2"/><path d="M1024.5 436 V450" stroke="#a8a8a8" stroke-width="1.2"/><path d="M1084.5 436 V450" stroke="#a8a8a8" stroke-width="1.2"/><path d="M1144.5 436 V450" stroke="#a8a8a8" stroke-width="1.2"/><path d="M1204.5 434 V452" stroke="#a8a8a8" stroke-width="1.2"/><path d="M1264.5 436 V450" stroke="#a8a8a8" stroke-width="1.2"/><path d="M1324.5 436 V450" stroke="#a8a8a8" stroke-width="1.2"/><path d="M1384.5 436 V450" stroke="#a8a8a8" stroke-width="1.2"/><path d="M1444.5 434 V452" stroke="#a8a8a8" stroke-width="1.2"/><path d="M965 440 H1020 A3 3 0 0 1 1020 446 H965 Z" fill="#b85200"/><path d="M1025 440 H1320 A3 3 0 0 1 1320 446 H1025 Z" fill="#0026b8"/><path d="M1325 440 H1440 A3 3 0 0 1 1440 446 H1325 Z" fill="#b85200"/><path d="M964.5 462 V480" stroke="#e8e8e8" stroke-width="1.2"/><path d="M1024.5 464 V478" stroke="#e8e8e8" stroke-width="1.2"/><path d="M1084.5 464 V478" stroke="#e8e8e8" stroke-width="1.2"/><path d="M1144.5 464 V478" stroke="#e8e8e8" stroke-width="1.2"/><path d="M1204.5 462 V480" stroke="#e8e8e8" stroke-width="1.2"/><path d="M1264.5 464 V478" stroke="#e8e8e8" stroke-width="1.2"/><path d="M1324.5 464 V478" stroke="#e8e8e8" stroke-width="1.2"/><path d="M1384.5 464 V478" stroke="#e8e8e8" stroke-width="1.2"/><path d="M1444.5 462 V480" stroke="#e8e8e8" stroke-width="1.2"/><path d="M965 468 H1020 A3 3 0 0 1 1020 474 H965 Z" fill="#f59a25"/><path d="M1025 468 H1320 A3 3 0 0 1 1320 474 H1025 Z" fill="#4a70f8"/><path d="M1325 468 H1380 A3 3 0 0 1 1380 474 H1325 Z" fill="#f59a25"/><path d="M1385 468 H1440 A3 3 0 0 1 1440 474 H1385 Z" fill="#4a70f8"/><path d="M964.5 490 V508" stroke="#a8a8a8" stroke-width="1.2"/><path d="M1024.5 492 V506" stroke="#a8a8a8" stroke-width="1.2"/><path d="M1084.5 492 V506" stroke="#a8a8a8" stroke-width="1.2"/><path d="M1144.5 492 V506" stroke="#a8a8a8" stroke-width="1.2"/><path d="M1204.5 490 V508" stroke="#a8a8a8" stroke-width="1.2"/><path d="M1264.5 492 V506" stroke="#a8a8a8" stroke-width="1.2"/><path d="M1324.5 492 V506" stroke="#a8a8a8" stroke-width="1.2"/><path d="M1384.5 492 V506" stroke="#a8a8a8" stroke-width="1.2"/><path d="M1444.5 490 V508" stroke="#a8a8a8" stroke-width="1.2"/><path d="M965 496 H1020 A3 3 0 0 1 1020 502 H965 Z" fill="#b85200"/><path d="M1025 496 H1380 A3 3 0 0 1 1380 502 H1025 Z" fill="#0026b8"/><path d="M1385 496 H1440 A3 3 0 0 1 1440 502 H1385 Z" fill="#b85200"/><path d="M964.5 518 V536" stroke="#a8a8a8" stroke-width="1.2"/><path d="M1024.5 520 V534" stroke="#a8a8a8" stroke-width="1.2"/><path d="M1084.5 520 V534" stroke="#a8a8a8" stroke-width="1.2"/><path d="M1144.5 520 V534" stroke="#a8a8a8" stroke-width="1.2"/><path d="M1204.5 518 V536" stroke="#a8a8a8" stroke-width="1.2"/><path d="M1264.5 520 V534" stroke="#a8a8a8" stroke-width="1.2"/><path d="M1324.5 520 V534" stroke="#a8a8a8" stroke-width="1.2"/><path d="M1384.5 520 V534" stroke="#a8a8a8" stroke-width="1.2"/><path d="M1444.5 518 V536" stroke="#a8a8a8" stroke-width="1.2"/><path d="M965 524 H1020 A3 3 0 0 1 1020 530 H965 Z" fill="#b85200"/><path d="M1025 524 H1440 A3 3 0 0 1 1440 530 H1025 Z" fill="#0026b8"/><path d="M964.5 546 V564" stroke="#a8a8a8" stroke-width="1.2"/><path d="M1024.5 548 V562" stroke="#a8a8a8" stroke-width="1.2"/><path d="M1084.5 548 V562" stroke="#a8a8a8" stroke-width="1.2"/><path d="M1144.5 548 V562" stroke="#a8a8a8" stroke-width="1.2"/><path d="M1204.5 546 V564" stroke="#a8a8a8" stroke-width="1.2"/><path d="M1264.5 548 V562" stroke="#a8a8a8" stroke-width="1.2"/><path d="M1324.5 548 V562" stroke="#a8a8a8" stroke-width="1.2"/><path d="M1384.5 546 V564" stroke="#a8a8a8" stroke-width="1.2"/><path d="M965 552 H1380 A3 3 0 0 1 1380 558 H965 Z" fill="#b85200"/><path d="M964.5 574 V592" stroke="#a8a8a8" stroke-width="1.2"/><path d="M1024.5 576 V590" stroke="#a8a8a8" stroke-width="1.2"/><path d="M1084.5 576 V590" stroke="#a8a8a8" stroke-width="1.2"/><path d="M1144.5 576 V590" stroke="#a8a8a8" stroke-width="1.2"/><path d="M1204.5 574 V592" stroke="#a8a8a8" stroke-width="1.2"/><path d="M1264.5 576 V590" stroke="#a8a8a8" stroke-width="1.2"/><path d="M1324.5 576 V590" stroke="#a8a8a8" stroke-width="1.2"/><path d="M1384.5 574 V592" stroke="#a8a8a8" stroke-width="1.2"/><path d="M965 580 H1320 A3 3 0 0 1 1320 586 H965 Z" fill="#b85200"/><path d="M1325 580 H1380 A3 3 0 0 1 1380 586 H1325 Z" fill="#0026b8"/><path d="M964.5 602 V620" stroke="#a8a8a8" stroke-width="1.2"/><path d="M1024.5 604 V618" stroke="#a8a8a8" stroke-width="1.2"/><path d="M1084.5 604 V618" stroke="#a8a8a8" stroke-width="1.2"/><path d="M1144.5 604 V618" stroke="#a8a8a8" stroke-width="1.2"/><path d="M1204.5 602 V620" stroke="#a8a8a8" stroke-width="1.2"/><path d="M1264.5 604 V618" stroke="#a8a8a8" stroke-width="1.2"/><path d="M1324.5 604 V618" stroke="#a8a8a8" stroke-width="1.2"/><path d="M1384.5 602 V620" stroke="#a8a8a8" stroke-width="1.2"/><path d="M965 608 H1260 A3 3 0 0 1 1260 614 H965 Z" fill="#b85200"/><path d="M1265 608 H1320 A3 3 0 0 1 1320 614 H1265 Z" fill="#0026b8"/><path d="M1325 608 H1380 A3 3 0 0 1 1380 614 H1325 Z" fill="#b85200"/><path d="M964.5 630 V648" stroke="#a8a8a8" stroke-width="1.2"/><path d="M1024.5 632 V646" stroke="#a8a8a8" stroke-width="1.2"/><path d="M1084.5 632 V646" stroke="#a8a8a8" stroke-width="1.2"/><path d="M1144.5 632 V646" stroke="#a8a8a8" stroke-width="1.2"/><path d="M1204.5 630 V648" stroke="#a8a8a8" stroke-width="1.2"/><path d="M1264.5 632 V646" stroke="#a8a8a8" stroke-width="1.2"/><path d="M1324.5 632 V646" stroke="#a8a8a8" stroke-width="1.2"/><path d="M1384.5 630 V648" stroke="#a8a8a8" stroke-width="1.2"/><path d="M965 636 H1260 A3 3 0 0 1 1260 642 H965 Z" fill="#b85200"/><path d="M1265 636 H1380 A3 3 0 0 1 1380 642 H1265 Z" fill="#0026b8"/><path d="M964.5 658 V676" stroke="#a8a8a8" stroke-width="1.2"/><path d="M1024.5 660 V674" stroke="#a8a8a8" stroke-width="1.2"/><path d="M1084.5 660 V674" stroke="#a8a8a8" stroke-width="1.2"/><path d="M1144.5 660 V674" stroke="#a8a8a8" stroke-width="1.2"/><path d="M1204.5 658 V676" stroke="#a8a8a8" stroke-width="1.2"/><path d="M1264.5 660 V674" stroke="#a8a8a8" stroke-width="1.2"/><path d="M1324.5 660 V674" stroke="#a8a8a8" stroke-width="1.2"/><path d="M1384.5 658 V676" stroke="#a8a8a8" stroke-width="1.2"/><path d="M965 664 H1200 A3 3 0 0 1 1200 670 H965 Z" fill="#b85200"/><path d="M1205 664 H1260 A3 3 0 0 1 1260 670 H1205 Z" fill="#0026b8"/><path d="M1265 664 H1380 A3 3 0 0 1 1380 670 H1265 Z" fill="#b85200"/><path d="M964.5 686 V704" stroke="#a8a8a8" stroke-width="1.2"/><path d="M1024.5 688 V702" stroke="#a8a8a8" stroke-width="1.2"/><path d="M1084.5 688 V702" stroke="#a8a8a8" stroke-width="1.2"/><path d="M1144.5 688 V702" stroke="#a8a8a8" stroke-width="1.2"/><path d="M1204.5 686 V704" stroke="#a8a8a8" stroke-width="1.2"/><path d="M1264.5 688 V702" stroke="#a8a8a8" stroke-width="1.2"/><path d="M1324.5 688 V702" stroke="#a8a8a8" stroke-width="1.2"/><path d="M1384.5 686 V704" stroke="#a8a8a8" stroke-width="1.2"/><path d="M965 692 H1200 A3 3 0 0 1 1200 698 H965 Z" fill="#b85200"/><path d="M1205 692 H1260 A3 3 0 0 1 1260 698 H1205 Z" fill="#0026b8"/><path d="M1265 692 H1320 A3 3 0 0 1 1320 698 H1265 Z" fill="#b85200"/><path d="M1325 692 H1380 A3 3 0 0 1 1380 698 H1325 Z" fill="#0026b8"/><path d="M964.5 714 V732" stroke="#a8a8a8" stroke-width="1.2"/><path d="M1024.5 716 V730" stroke="#a8a8a8" stroke-width="1.2"/><path d="M1084.5 716 V730" stroke="#a8a8a8" stroke-width="1.2"/><path d="M1144.5 716 V730" stroke="#a8a8a8" stroke-width="1.2"/><path d="M1204.5 714 V732" stroke="#a8a8a8" stroke-width="1.2"/><path d="M1264.5 716 V730" stroke="#a8a8a8" stroke-width="1.2"/><path d="M1324.5 716 V730" stroke="#a8a8a8" stroke-width="1.2"/><path d="M1384.5 714 V732" stroke="#a8a8a8" stroke-width="1.2"/><path d="M965 720 H1200 A3 3 0 0 1 1200 726 H965 Z" fill="#b85200"/><path d="M1205 720 H1320 A3 3 0 0 1 1320 726 H1205 Z" fill="#0026b8"/><path d="M1325 720 H1380 A3 3 0 0 1 1380 726 H1325 Z" fill="#b85200"/><path d="M964.5 742 V760" stroke="#a8a8a8" stroke-width="1.2"/><path d="M1024.5 744 V758" stroke="#a8a8a8" stroke-width="1.2"/><path d="M1084.5 744 V758" stroke="#a8a8a8" stroke-width="1.2"/><path d="M1144.5 744 V758" stroke="#a8a8a8" stroke-width="1.2"/><path d="M1204.5 742 V760" stroke="#a8a8a8" stroke-width="1.2"/><path d="M1264.5 744 V758" stroke="#a8a8a8" stroke-width="1.2"/><path d="M1324.5 744 V758" stroke="#a8a8a8" stroke-width="1.2"/><path d="M1384.5 742 V760" stroke="#a8a8a8" stroke-width="1.2"/><path d="M965 748 H1200 A3 3 0 0 1 1200 754 H965 Z" fill="#b85200"/><path d="M1205 748 H1380 A3 3 0 0 1 1380 754 H1205 Z" fill="#0026b8"/></svg>
<div class="r" style="left:213px;top:657px;width:499px;height:29px;background:#283048;border-radius:5px"></div>
<svg width="1479" height="827"><path d="M223.5 661 V679" stroke="#e8e8e8" stroke-width="1.2"/><path d="M283.5 663 V677" stroke="#e8e8e8" stroke-width="1.2"/><path d="M343.5 663 V677" stroke="#e8e8e8" stroke-width="1.2"/><path d="M403.5 663 V677" stroke="#e8e8e8" stroke-width="1.2"/><path d="M463.5 661 V679" stroke="#e8e8e8" stroke-width="1.2"/><path d="M523.5 663 V677" stroke="#e8e8e8" stroke-width="1.2"/><path d="M583.5 663 V677" stroke="#e8e8e8" stroke-width="1.2"/><path d="M643.5 663 V677" stroke="#e8e8e8" stroke-width="1.2"/><path d="M703.5 661 V679" stroke="#e8e8e8" stroke-width="1.2"/><path d="M224 667 H279 A3 3 0 0 1 279 673 H224 Z" fill="#f59a25"/><path d="M284 667 H579 A3 3 0 0 1 579 673 H284 Z" fill="#4a70f8"/><path d="M584 667 H639 A3 3 0 0 1 639 673 H584 Z" fill="#f59a25"/><path d="M644 667 H699 A3 3 0 0 1 699 673 H644 Z" fill="#4a70f8"/></svg>
<div class="t" style="left:75.20px;top:664.65px;font-size:14px;color:#c0c6d0;transform:translateX(-50%);">130</div>
<div class="t" style="left:727.20px;top:666.15px;font-size:14px;color:#c0c6d0;transform:translateX(-50%);">4</div>
<div class="t" style="left:50.80px;top:624.92px;font-size:12.5px;color:#e8c88c;transform:translateX(-50%);">Transpose</div>
<div class="r" style="left:87px;top:616px;width:50px;height:30px;background:#000;border:1px solid #c8c8c8;border-radius:7.5px;box-sizing:border-box"></div>
<div class="r" style="left:91px;top:620px;width:42px;height:22px;background:#10141c;border-radius:2px"></div>
<div class="t" style="left:108.40px;top:625.42px;font-size:12.5px;color:#20d020;transform:translateX(-50%);">0</div>
<div class="t" style="left:186.40px;top:624.92px;font-size:12.5px;color:#e8c88c;transform:translateX(-50%);">Scale</div>
<div class="r" style="left:212px;top:616px;width:42px;height:30px;background:#000;border:1px solid #c8c8c8;border-radius:7.5px;box-sizing:border-box"></div>
<div class="r" style="left:216px;top:620px;width:34px;height:22px;background:#10141c;border-radius:2px"></div>
<div class="t" style="left:228.00px;top:625.42px;font-size:12.5px;color:#e04848;transform:translateX(-50%);">1</div>
<div class="t" style="left:275.50px;top:622.98px;font-size:14.2px;color:#e0666e;transform:translateX(-50%);">C</div>
<div class="t" style="left:350.60px;top:623.40px;font-size:14.3px;color:#e0666e;transform:translateX(-50%);">Melodic Minor Dn</div>
<div class="t" style="left:424.00px;top:622.98px;font-size:14.2px;color:#e0666e;transform:translateX(-50%);">c</div>
<div class="t" style="left:444.20px;top:622.98px;font-size:14.2px;color:#e0666e;transform:translateX(-50%);">7</div>
<div class="t" style="left:536.50px;top:617.59px;font-size:12.3px;color:#e8c88c;transform:translateX(-50%);">Copy Transpose</div>
<div class="t" style="left:536.00px;top:633.09px;font-size:12.3px;color:#e8c88c;transform:translateX(-50%);">& Scale Settings</div>
<div class="r" style="left:592px;top:616px;width:128px;height:30px;background:#000;border:1px solid #c8c8c8;border-radius:7.5px;box-sizing:border-box"></div>
<div class="r" style="left:596px;top:620px;width:120px;height:22px;background:#10141c;border-radius:2px"></div>
<div class="t" style="left:616.85px;top:624.59px;font-size:12.3px;color:#4e60f0;transform:translateX(-50%);">Kb A</div>
<div class="t" style="left:657.00px;top:624.59px;font-size:12.3px;color:#4e60f0;transform:translateX(-50%);">Kb B</div>
<div class="t" style="left:691.20px;top:624.59px;font-size:12.3px;color:#4e60f0;transform:translateX(-50%);">Guit</div>
<div class="t" style="left:837.50px;top:562.84px;font-size:12px;color:#e8c88c;transform:translateX(-50%);">Keyboard Outline</div>
<div class="t" style="left:908.90px;top:562.23px;font-size:14.5px;color:#30e030;transform:translateX(-50%);">88</div>
<div class="t" style="left:846.00px;top:585.84px;font-size:12px;color:#e8c88c;transform:translateX(-50%);">Velocity Curve</div>
<div class="r" style="left:811px;top:605px;width:65px;height:66px;box-sizing:border-box;border:1px solid #a0a0a0"></div>
<svg width="1479" height="827"><path d="M812 670 Q842.5 657 873 611.5" fill="none" stroke="#10d010" stroke-width="1.2"/></svg>
<div class="t" style="left:795.00px;top:624.59px;font-size:12.3px;color:#c8d0e0;transform:translateX(-50%);">Out</div>
<div class="t" style="left:795.50px;top:640.59px;font-size:12.3px;color:#c8d0e0;transform:translateX(-50%);">Vel</div>
<div class="t" style="left:845.00px;top:674.59px;font-size:12.3px;color:#c8d0e0;transform:translateX(-50%);">In Vel</div>
</body></html>
